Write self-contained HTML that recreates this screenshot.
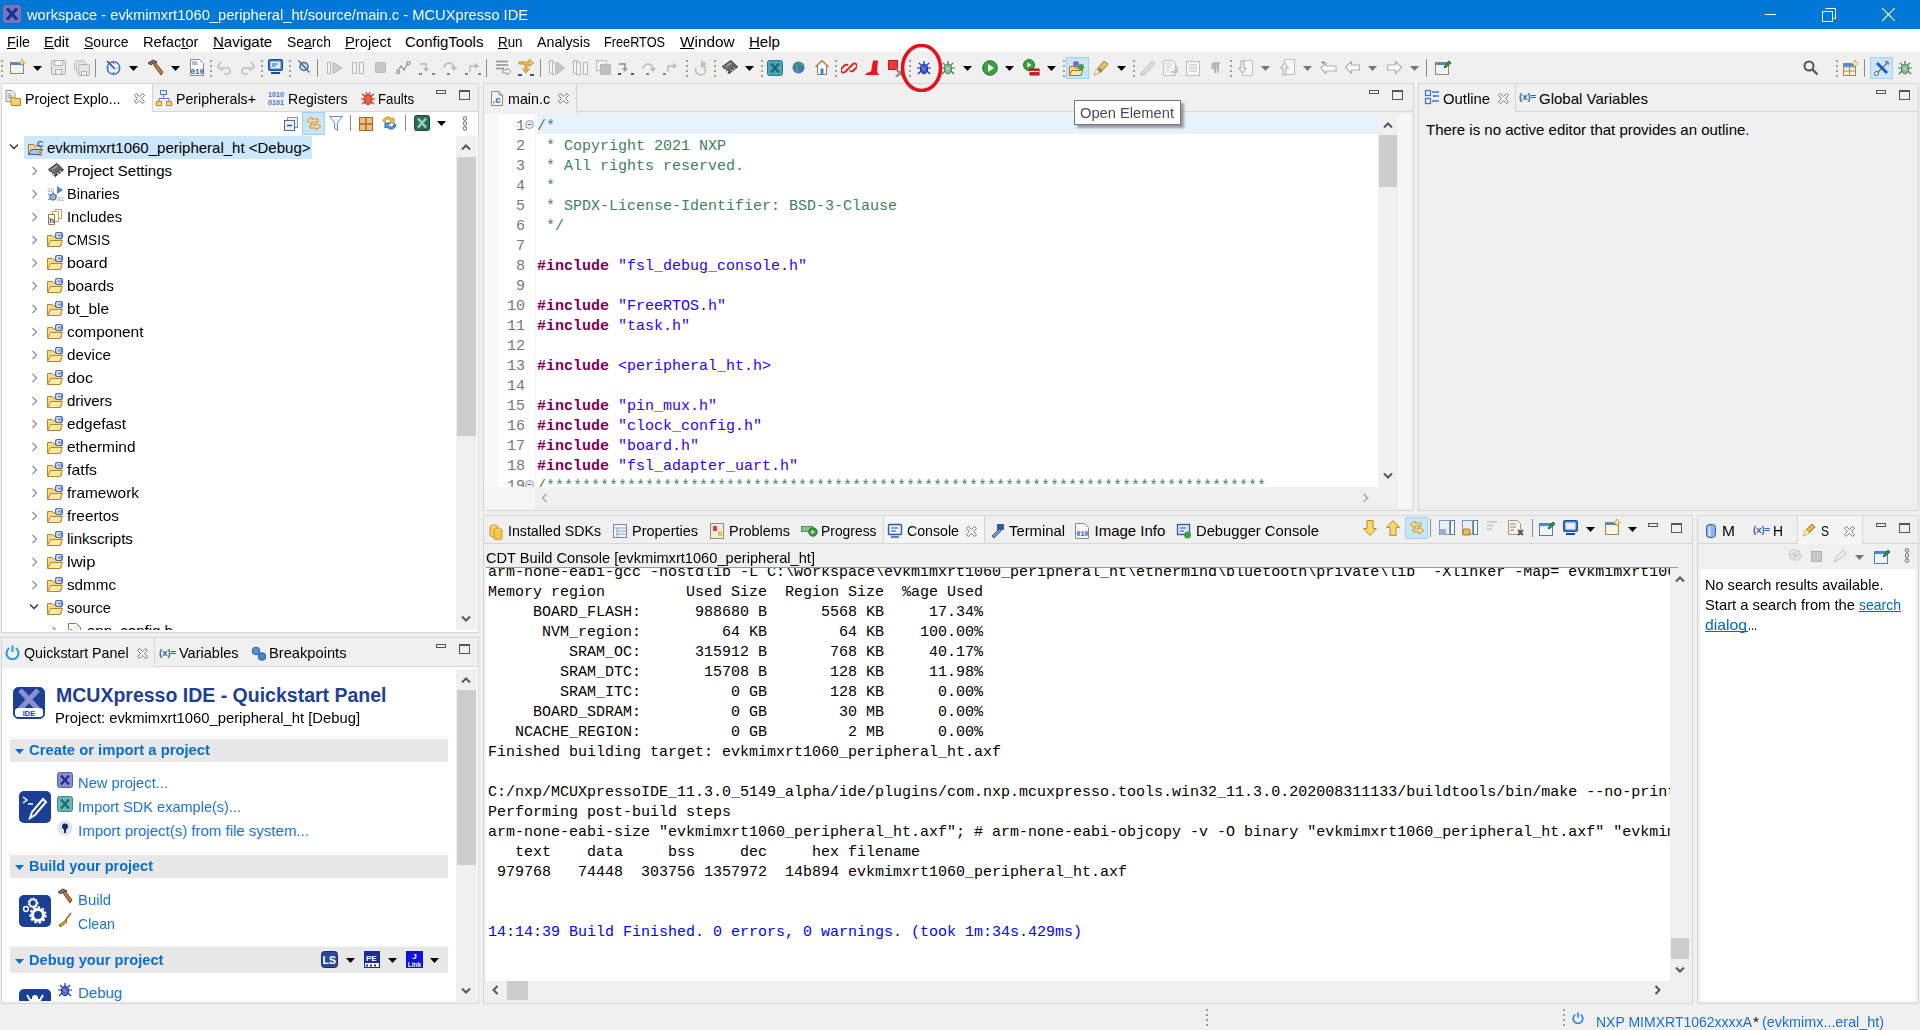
<!DOCTYPE html><html><head><meta charset="utf-8"><title>MCUXpresso IDE</title><style>
*{margin:0;padding:0;box-sizing:border-box}
html,body{width:1920px;height:1030px;overflow:hidden;background:#f0f0f0;font-family:"Liberation Sans",sans-serif;font-size:15px;color:#000}
div,span,svg{position:absolute}
.t{white-space:pre;line-height:20px}
.m{font-family:"Liberation Mono",monospace;font-size:15px;white-space:pre;line-height:20px}
</style></head><body>
<div style="left:0px;top:0px;width:1920px;height:29px;background:#0078d7"></div>
<svg style="left:2px;top:4px;" width="20" height="20" viewBox="0 0 20 20"><rect x="0.5" y="0.5" width="19" height="19" rx="3" fill="#7078c4" stroke="#4a55a8"/><path d="M5 4.5 L15 15.5 M15 4.5 L5 15.5" stroke="#1d2f8c" stroke-width="3.2"/></svg>
<span class="t" style="left:27px;top:5px;font-size:15px;transform:scaleX(0.979);transform-origin:0 0;color:#fff">workspace - evkmimxrt1060_peripheral_ht/source/main.c - MCUXpresso IDE</span>
<div style="left:1765px;top:14px;width:11px;height:1px;background:#fff"></div>
<svg style="left:1822px;top:8px;" width="14" height="14" viewBox="0 0 14 14"><path d="M3.5 0.5h10v10h-2 M0.5 3.5h10v10h-10z" fill="none" stroke="#fff"/></svg>
<svg style="left:1882px;top:8px;" width="13" height="13" viewBox="0 0 13 13"><path d="M0 0L13 13M13 0L0 13" stroke="#fff" stroke-width="1.2"/></svg>
<div style="left:0px;top:29px;width:1920px;height:23px;background:#fff"></div>
<span class="t" style="left:7px;top:32px;font-size:15px;transform:scaleX(0.952);transform-origin:0 0;color:#000">File</span>
<div style="left:7px;top:48px;width:9px;height:1px;background:#000"></div>
<span class="t" style="left:44px;top:32px;font-size:15px;transform:scaleX(0.967);transform-origin:0 0;color:#000">Edit</span>
<div style="left:44px;top:48px;width:10px;height:1px;background:#000"></div>
<span class="t" style="left:84px;top:32px;font-size:15px;transform:scaleX(0.936);transform-origin:0 0;color:#000">Source</span>
<div style="left:84px;top:48px;width:9px;height:1px;background:#000"></div>
<span class="t" style="left:143px;top:32px;font-size:15px;transform:scaleX(0.979);transform-origin:0 0;color:#000">Refactor</span>
<div style="left:181px;top:48px;width:7px;height:1px;background:#000"></div>
<span class="t" style="left:213px;top:32px;font-size:15px;color:#000">Navigate</span>
<div style="left:213px;top:48px;width:11px;height:1px;background:#000"></div>
<span class="t" style="left:287px;top:32px;font-size:15px;transform:scaleX(0.926);transform-origin:0 0;color:#000">Search</span>
<div style="left:304px;top:48px;width:8px;height:1px;background:#000"></div>
<span class="t" style="left:345px;top:32px;font-size:15px;transform:scaleX(0.985);transform-origin:0 0;color:#000">Project</span>
<div style="left:345px;top:48px;width:10px;height:1px;background:#000"></div>
<span class="t" style="left:405px;top:32px;font-size:15px;color:#000">ConfigTools</span>
<span class="t" style="left:498px;top:32px;font-size:15px;transform:scaleX(0.890);transform-origin:0 0;color:#000">Run</span>
<div style="left:498px;top:48px;width:10px;height:1px;background:#000"></div>
<span class="t" style="left:537px;top:32px;font-size:15px;transform:scaleX(0.949);transform-origin:0 0;color:#000">Analysis</span>
<span class="t" style="left:604px;top:32px;font-size:15px;transform:scaleX(0.848);transform-origin:0 0;color:#000">FreeRTOS</span>
<span class="t" style="left:680px;top:32px;font-size:15px;transform:scaleX(1.022);transform-origin:0 0;color:#000">Window</span>
<div style="left:680px;top:48px;width:14px;height:1px;background:#000"></div>
<span class="t" style="left:749px;top:32px;font-size:15px;color:#000">Help</span>
<div style="left:749px;top:48px;width:11px;height:1px;background:#000"></div>
<div style="left:0px;top:52px;width:1920px;height:30px;background:#f0f0f0"></div>
<div style="left:1px;top:60px;width:2px;height:2px;background:#a89f86"></div>
<div style="left:1px;top:65px;width:2px;height:2px;background:#a89f86"></div>
<div style="left:1px;top:70px;width:2px;height:2px;background:#a89f86"></div>
<div style="left:1px;top:75px;width:2px;height:2px;background:#a89f86"></div>
<svg style="left:10px;top:59px;" width="16" height="16" viewBox="0 0 16 16"><rect x="0.5" y="3.5" width="13" height="11" fill="#eef5fc" stroke="#a08850"/><rect x="0.5" y="3.5" width="13" height="2.5" fill="#4a8ad0"/><path d="M12 0l1 2.5 2.5 1-2.5 1-1 2.5-1-2.5-2.5-1 2.5-1z" fill="#f8e8a0" stroke="#c8962a" stroke-width="0.7"/></svg>
<svg style="left:33px;top:66px;" width="9" height="5" viewBox="0 0 9 5"><path d="M0 0H9L4.5 5z" fill="#000"/></svg>
<svg style="left:51px;top:60px;" width="16" height="16" viewBox="0 0 16 16"><rect x="0.5" y="0.5" width="14" height="14" rx="1.5" fill="#e6e6e6" stroke="#b0b0b0"/><rect x="3.5" y="0.5" width="8" height="5" fill="#f4f4f4" stroke="#b0b0b0"/><rect x="4.5" y="9.5" width="6" height="5" fill="#f0f0f0" stroke="#b0b0b0"/></svg>
<svg style="left:74px;top:60px;" width="16" height="16" viewBox="0 0 16 16"><rect x="0.5" y="0.5" width="10" height="10" rx="1" fill="#eee" stroke="#c0c0c0"/><rect x="2.5" y="2.5" width="10" height="10" rx="1" fill="#eee" stroke="#c0c0c0"/><rect x="4.5" y="4.5" width="11" height="11" rx="1.5" fill="#e6e6e6" stroke="#b0b0b0"/><rect x="7.5" y="11.5" width="5" height="4" fill="#f0f0f0" stroke="#b0b0b0"/></svg>
<div style="left:95px;top:59px;width:1px;height:18px;background:#8c8c8c"></div>
<svg style="left:106px;top:60px;" width="15" height="15" viewBox="0 0 15 15"><circle cx="7.5" cy="8" r="6.3" fill="#e8f0fa" stroke="#3a7ac0" stroke-width="1.4"/><path d="M1 1l8 8" stroke="#3a4a8a" stroke-width="1.6"/><path d="M7.5 2v2M13.5 8h-2M7.5 14v-2M1.5 8h2" stroke="#3a7ac0"/></svg>
<svg style="left:129px;top:66px;" width="9" height="5" viewBox="0 0 9 5"><path d="M0 0H9L4.5 5z" fill="#000"/></svg>
<svg style="left:147px;top:59px;" width="17" height="17" viewBox="0 0 17 17"><path d="M1 4l5-3 4 2-2 2-2-1-2 2z" fill="#777" stroke="#444"/><path d="M6 5l2-2 8 10-2 3z" fill="#b87a40" stroke="#7a4a1a"/></svg>
<svg style="left:171px;top:66px;" width="9" height="5" viewBox="0 0 9 5"><path d="M0 0H9L4.5 5z" fill="#000"/></svg>
<svg style="left:190px;top:59px;" width="14" height="17" viewBox="0 0 14 17"><path d="M0.5 0.5h9l4 4v12h-13z" fill="#fff" stroke="#8a8a8a"/><path d="M2 3h5M2 5h6" stroke="#4a7ad0"/><text x="0.5" y="14.5" font-size="7.5" font-family="Liberation Mono" font-weight="bold" fill="#2a5aa8">010</text></svg>
<div style="left:210px;top:60px;width:2px;height:2px;background:#a89f86"></div>
<div style="left:210px;top:65px;width:2px;height:2px;background:#a89f86"></div>
<div style="left:210px;top:70px;width:2px;height:2px;background:#a89f86"></div>
<div style="left:210px;top:75px;width:2px;height:2px;background:#a89f86"></div>
<svg style="left:217px;top:60px;" width="15" height="15" viewBox="0 0 15 15"><path d="M4 2L0.5 7 5 10V8h5a3 3 0 0 1 0 6H7" fill="none" stroke="#c0c0c0" stroke-width="1.6"/></svg>
<svg style="left:240px;top:60px;" width="15" height="15" viewBox="0 0 15 15"><path d="M11 2l3.5 5L10 10V8H5a3 3 0 0 0 0 6h3" fill="none" stroke="#c0c0c0" stroke-width="1.6"/></svg>
<div style="left:261px;top:60px;width:2px;height:2px;background:#a89f86"></div>
<div style="left:261px;top:65px;width:2px;height:2px;background:#a89f86"></div>
<div style="left:261px;top:70px;width:2px;height:2px;background:#a89f86"></div>
<div style="left:261px;top:75px;width:2px;height:2px;background:#a89f86"></div>
<svg style="left:268px;top:59px;" width="15" height="16" viewBox="0 0 15 16"><rect x="0.5" y="0.5" width="14" height="11" rx="1.5" fill="#3a78c8" stroke="#1a4a98"/><rect x="2.5" y="2.5" width="10" height="7" fill="#e8f0fa"/><path d="M4 5h6M4 7h4" stroke="#2a5aa8"/><path d="M3 14h9" stroke="#1a4a98" stroke-width="2"/></svg>
<div style="left:289px;top:60px;width:2px;height:2px;background:#a89f86"></div>
<div style="left:289px;top:65px;width:2px;height:2px;background:#a89f86"></div>
<div style="left:289px;top:70px;width:2px;height:2px;background:#a89f86"></div>
<div style="left:289px;top:75px;width:2px;height:2px;background:#a89f86"></div>
<svg style="left:298px;top:60px;" width="12" height="13" viewBox="0 0 12 13"><circle cx="6" cy="6.5" r="4" fill="#cde" stroke="#3a6aa8" stroke-width="1.5"/><path d="M0.5 0.5l11 12" stroke="#4a6a9a" stroke-width="1.3"/></svg>
<div style="left:317px;top:59px;width:1px;height:18px;background:#8c8c8c"></div>
<svg style="left:327px;top:62px;" width="16" height="12" viewBox="0 0 16 12"><rect x="0.5" y="0.5" width="3" height="11" fill="#f4f4f4" stroke="#b8b8b8"/><path d="M6 0.5l9 5.5-9 5.5z" fill="#d0d0d0" stroke="#b8b8b8"/></svg>
<svg style="left:352px;top:62px;" width="12" height="12" viewBox="0 0 12 12"><rect x="0.5" y="0.5" width="4" height="11" fill="#f4f4f4" stroke="#b8b8b8"/><rect x="7.5" y="0.5" width="4" height="11" fill="#f4f4f4" stroke="#b8b8b8"/></svg>
<svg style="left:375px;top:62px;" width="11" height="11" viewBox="0 0 11 11"><rect x="0.5" y="0.5" width="10" height="10" rx="1" fill="#c8c8c8" stroke="#b8b8b8"/></svg>
<svg style="left:396px;top:61px;" width="15" height="13" viewBox="0 0 15 13"><path d="M1 11l4-6 3 4 4-7" fill="none" stroke="#999" stroke-width="1.3"/><circle cx="2" cy="11" r="1.8" fill="#ddd" stroke="#888"/><circle cx="12.5" cy="2" r="1.8" fill="#ddd" stroke="#888"/></svg>
<svg style="left:419px;top:61px;" width="16" height="14" viewBox="0 0 16 14"><path d="M1 3h6v6" fill="none" stroke="#b8b8b8" stroke-width="1.4"/><path d="M4 7l3 4 3-4z" fill="#b8b8b8"/><rect x="0" y="12" width="3" height="2" fill="#888"/><rect x="13" y="12" width="3" height="2" fill="#888"/></svg>
<svg style="left:442px;top:60px;" width="16" height="15" viewBox="0 0 16 15"><path d="M2 8a5 5 0 0 1 10 0" fill="none" stroke="#b8b8b8" stroke-width="1.4"/><path d="M9 7l3 4 3-4z" fill="#b8b8b8"/><rect x="5" y="13" width="3" height="2" fill="#888"/></svg>
<svg style="left:465px;top:60px;" width="16" height="15" viewBox="0 0 16 15"><path d="M5 12V6h6" fill="none" stroke="#b8b8b8" stroke-width="1.4"/><path d="M10 3l4 3-4 3z" fill="#b8b8b8"/><rect x="0" y="13" width="3" height="2" fill="#888"/><rect x="13" y="13" width="3" height="2" fill="#888"/></svg>
<div style="left:486px;top:59px;width:1px;height:18px;background:#8c8c8c"></div>
<svg style="left:495px;top:60px;" width="16" height="16" viewBox="0 0 16 16"><path d="M1 1.5h12M1 5h12M1 8.5h8" stroke="#909090" stroke-width="1.6"/><path d="M8 10h4V8l4 3.5-4 3.5v-2H8z" fill="#fff" stroke="#909090"/></svg>
<svg style="left:518px;top:59px;" width="17" height="17" viewBox="0 0 17 17"><path d="M1 3h10V0.5l4.5 3.5L11 7.5V5H9v7l2.5-2.5L8 14 4.5 9.5 7 12V5H1z" fill="#f8d060" stroke="#c08820"/><rect x="0" y="15" width="4" height="2" fill="#2a5aa8"/><rect x="12" y="15" width="4" height="2" fill="#2a5aa8"/></svg>
<div style="left:540px;top:59px;width:1px;height:18px;background:#8c8c8c"></div>
<svg style="left:549px;top:60px;" width="16" height="15" viewBox="0 0 16 15"><rect x="0.5" y="0.5" width="3" height="13" fill="#f4f4f4" stroke="#b8b8b8"/><rect x="3.5" y="2.5" width="3" height="12" fill="#f4f4f4" stroke="#b8b8b8"/><path d="M8 2l7.5 6L8 14z" fill="#c8c8c8" stroke="#b8b8b8"/></svg>
<svg style="left:573px;top:60px;" width="15" height="15" viewBox="0 0 15 15"><rect x="0.5" y="0.5" width="4" height="13" fill="#f4f4f4" stroke="#b8b8b8"/><rect x="3.5" y="2.5" width="4" height="12" fill="#f4f4f4" stroke="#b8b8b8"/><rect x="10.5" y="2.5" width="4" height="12" fill="#f4f4f4" stroke="#b8b8b8"/></svg>
<svg style="left:596px;top:60px;" width="15" height="15" viewBox="0 0 15 15"><rect x="0.5" y="0.5" width="10" height="10" fill="#f0f0f0" stroke="#b8b8b8"/><rect x="4.5" y="4.5" width="10" height="10" fill="#c0c0c0" stroke="#b8b8b8"/></svg>
<svg style="left:618px;top:61px;" width="16" height="14" viewBox="0 0 16 14"><path d="M1 3h6v6" fill="none" stroke="#888" stroke-width="1.4"/><path d="M4 7l3 4 3-4z" fill="#999"/><rect x="0" y="12" width="3" height="2" fill="#555"/><rect x="13" y="12" width="3" height="2" fill="#555"/></svg>
<svg style="left:641px;top:61px;" width="16" height="14" viewBox="0 0 16 14"><path d="M2 8a5 5 0 0 1 10 0" fill="none" stroke="#b8b8b8" stroke-width="1.4"/><path d="M9 7l3 4 3-4z" fill="#b8b8b8"/><rect x="5" y="12" width="3" height="2" fill="#888"/></svg>
<svg style="left:663px;top:60px;" width="16" height="15" viewBox="0 0 16 15"><path d="M5 12V6h6" fill="none" stroke="#b8b8b8" stroke-width="1.4"/><path d="M10 3l4 3-4 3z" fill="#b8b8b8"/><rect x="0" y="13" width="3" height="2" fill="#888"/></svg>
<div style="left:686px;top:60px;width:2px;height:2px;background:#a89f86"></div>
<div style="left:686px;top:65px;width:2px;height:2px;background:#a89f86"></div>
<div style="left:686px;top:70px;width:2px;height:2px;background:#a89f86"></div>
<div style="left:686px;top:75px;width:2px;height:2px;background:#a89f86"></div>
<svg style="left:693px;top:59px;" width="16" height="17" viewBox="0 0 16 17"><path d="M8 1l6 4-6 4z" fill="#c0c0c0"/><path d="M3 9a5 5 0 1 0 5-3" fill="none" stroke="#b8b8b8" stroke-width="1.4"/></svg>
<div style="left:714px;top:60px;width:2px;height:2px;background:#a89f86"></div>
<div style="left:714px;top:65px;width:2px;height:2px;background:#a89f86"></div>
<div style="left:714px;top:70px;width:2px;height:2px;background:#a89f86"></div>
<div style="left:714px;top:75px;width:2px;height:2px;background:#a89f86"></div>
<svg style="left:722px;top:60px;" width="16" height="15" viewBox="0 0 16 15"><defs><linearGradient id="cg" x1="0" y1="0" x2="1" y2="1"><stop offset="0" stop-color="#9a9a9a"/><stop offset="1" stop-color="#3a3a3a"/></linearGradient></defs><path d="M0.5 6.5L9 0.5 15.5 7 7 13.5z" fill="url(#cg)" stroke="#222"/><path d="M3 9.5l1 1M5 11l1 1M9.5 11l1-1M12 9l1-1" stroke="#fff" stroke-width="1.3"/><path d="M5 6l4-3" stroke="#bbb"/></svg>
<svg style="left:745px;top:66px;" width="9" height="5" viewBox="0 0 9 5"><path d="M0 0H9L4.5 5z" fill="#000"/></svg>
<div style="left:761px;top:60px;width:2px;height:2px;background:#a89f86"></div>
<div style="left:761px;top:65px;width:2px;height:2px;background:#a89f86"></div>
<div style="left:761px;top:70px;width:2px;height:2px;background:#a89f86"></div>
<div style="left:761px;top:75px;width:2px;height:2px;background:#a89f86"></div>
<svg style="left:767px;top:60px;" width="16" height="16" viewBox="0 0 16 16"><rect x="0.5" y="0.5" width="15" height="15" rx="2" fill="#4aa8b8" stroke="#2a7888"/><path d="M4 3.5L12 12.5M12 3.5L4 12.5" stroke="#1a6a78" stroke-width="2.6"/></svg>
<svg style="left:792px;top:61px;" width="13" height="13" viewBox="0 0 13 13"><circle cx="6.5" cy="6.5" r="6" fill="#3a7ac8"/><path d="M3 3c2 0 3 2 2 4s1 3 2 4M8 1c0 2 2 3 4 3" stroke="#4aa850" stroke-width="2" fill="none"/></svg>
<svg style="left:815px;top:59px;" width="14" height="16" viewBox="0 0 14 16"><path d="M7 1L0.5 7.5h2v8h9v-8h2z" fill="#fff" stroke="#8a7a5a"/><rect x="5.5" y="9.5" width="3" height="6" fill="#3a8ad0"/><path d="M2 7L7 2l5 5" fill="none" stroke="#c8a040" stroke-width="1.4"/></svg>
<div style="left:835px;top:60px;width:2px;height:2px;background:#a89f86"></div>
<div style="left:835px;top:65px;width:2px;height:2px;background:#a89f86"></div>
<div style="left:835px;top:70px;width:2px;height:2px;background:#a89f86"></div>
<div style="left:835px;top:75px;width:2px;height:2px;background:#a89f86"></div>
<svg style="left:841px;top:60px;" width="16" height="16" viewBox="0 0 16 16"><path d="M6 10L4 12a2.5 2.5 0 0 1-3.5-3.5l3-3a2.5 2.5 0 0 1 3.5 0M10 6l2-2a2.5 2.5 0 0 1 3.5 3.5l-3 3a2.5 2.5 0 0 1-3.5 0M5.5 10.5l5-5" fill="none" stroke="#e02020" stroke-width="1.8"/></svg>
<svg style="left:864px;top:60px;" width="16" height="16" viewBox="0 0 16 16"><path d="M9 0.5h5l-1 11 2 3.5H1l1-1.5 5-2z" fill="#e81818"/></svg>
<svg style="left:888px;top:60px;" width="18" height="17" viewBox="0 0 18 17"><rect x="0.5" y="0.5" width="9" height="9" fill="#e83a3a" stroke="#b82020"/><path d="M8 9l8 8M16 9l-8 8" stroke="#8a8a8a" stroke-width="2.4"/></svg>
<div style="left:909px;top:60px;width:2px;height:2px;background:#a89f86"></div>
<div style="left:909px;top:65px;width:2px;height:2px;background:#a89f86"></div>
<div style="left:909px;top:70px;width:2px;height:2px;background:#a89f86"></div>
<div style="left:909px;top:75px;width:2px;height:2px;background:#a89f86"></div>
<svg style="left:916px;top:60px;" width="16" height="16" viewBox="0 0 16 16"><path d="M3 3l3 3M13 3l-3 3M1 8h4M15 8h-4M2 14l3-3M14 14l-3-3M8 1v3" stroke="#1a2a9a" stroke-width="1.2"/><ellipse cx="8" cy="9" rx="3.6" ry="4.8" fill="#3a5ad8" stroke="#1a2a9a"/><path d="M6.5 7.5l2 2" stroke="#fff" stroke-width="0.8"/></svg>
<svg style="left:940px;top:60px;" width="16" height="16" viewBox="0 0 16 16"><path d="M3 3l3 3M13 3l-3 3M1 8h4M15 8h-4M2 14l3-3M14 14l-3-3M8 1v3" stroke="#3a7a5a" stroke-width="1.2"/><ellipse cx="8" cy="9" rx="3.6" ry="4.8" fill="#8ac08a" stroke="#3a7a5a"/><path d="M6.5 7.5l2 2" stroke="#fff" stroke-width="0.8"/></svg>
<svg style="left:963px;top:66px;" width="9" height="5" viewBox="0 0 9 5"><path d="M0 0H9L4.5 5z" fill="#000"/></svg>
<svg style="left:982px;top:60px;" width="16" height="16" viewBox="0 0 16 16"><circle cx="8" cy="8" r="7.3" fill="#3aa040" stroke="#1a7a28"/><path d="M6 4l6 4-6 4z" fill="#fff"/></svg>
<svg style="left:1005px;top:66px;" width="9" height="5" viewBox="0 0 9 5"><path d="M0 0H9L4.5 5z" fill="#000"/></svg>
<svg style="left:1023px;top:59px;" width="17" height="17" viewBox="0 0 17 17"><circle cx="6" cy="6" r="5.5" fill="#3aa040" stroke="#1a7a28"/><path d="M4.5 3.5l4 2.5-4 2.5z" fill="#fff"/><rect x="7" y="10" width="9" height="6" fill="#e02020" stroke="#a01010"/><path d="M7 12.5h9" stroke="#fff"/></svg>
<svg style="left:1047px;top:66px;" width="9" height="5" viewBox="0 0 9 5"><path d="M0 0H9L4.5 5z" fill="#000"/></svg>
<div style="left:1063px;top:60px;width:2px;height:2px;background:#a89f86"></div>
<div style="left:1063px;top:65px;width:2px;height:2px;background:#a89f86"></div>
<div style="left:1063px;top:70px;width:2px;height:2px;background:#a89f86"></div>
<div style="left:1063px;top:75px;width:2px;height:2px;background:#a89f86"></div>
<div style="left:1066px;top:57px;width:23px;height:22px;background:#cce4f7;border:1px solid #99d1ff"></div>
<svg style="left:1069px;top:60px;" width="17" height="16" viewBox="0 0 17 16"><path d="M0.5 6.5h5l1 1.5h6v7h-12z" fill="#f5d98a" stroke="#a8782a"/><path d="M0.5 15.5l2.5-5h11l-2.5 5z" fill="#fbe7a8" stroke="#a8782a"/><circle cx="7" cy="4" r="3" fill="#7a6ad0"/><circle cx="12" cy="7" r="3" fill="#3aa040"/></svg>
<svg style="left:1093px;top:59px;" width="17" height="17" viewBox="0 0 17 17"><path d="M1 16l3-6 7-8 4 3-7 8z" fill="#e8c060" stroke="#a8782a"/><path d="M1 16l3-6 3 3z" fill="#fff3c0"/><circle cx="7" cy="11" r="2" fill="#888"/></svg>
<svg style="left:1117px;top:66px;" width="9" height="5" viewBox="0 0 9 5"><path d="M0 0H9L4.5 5z" fill="#000"/></svg>
<div style="left:1133px;top:60px;width:2px;height:2px;background:#a89f86"></div>
<div style="left:1133px;top:65px;width:2px;height:2px;background:#a89f86"></div>
<div style="left:1133px;top:70px;width:2px;height:2px;background:#a89f86"></div>
<div style="left:1133px;top:75px;width:2px;height:2px;background:#a89f86"></div>
<svg style="left:1139px;top:60px;" width="17" height="16" viewBox="0 0 17 16"><path d="M1 15h5l10-12-3-2-9 10z" fill="#e0e0d8" stroke="#c0c0b8"/></svg>
<svg style="left:1163px;top:60px;" width="15" height="16" viewBox="0 0 15 16"><path d="M0.5 0.5h9l3 3v12h-12z" fill="#f4f4f4" stroke="#c0c0c0"/><path d="M3 4h5M3 7h5M3 10h3" stroke="#c8c8c8"/><path d="M14 6v6H8" fill="none" stroke="#b8b8b8" stroke-width="1.4"/></svg>
<svg style="left:1186px;top:61px;" width="14" height="15" viewBox="0 0 14 15"><rect x="0.5" y="0.5" width="13" height="14" fill="#f8f8f8" stroke="#c0c0c0"/><path d="M3 4h8M3 7h8M3 10h8" stroke="#b8b8b8"/></svg>
<svg style="left:1211px;top:62px;" width="9" height="12" viewBox="0 0 9 12"><path d="M4 11V1h5M7 1v10M4 1a3 3 0 0 0 0 6" fill="#c8c8c8" stroke="#b0b0b0" stroke-width="1.6"/></svg>
<div style="left:1230px;top:60px;width:2px;height:2px;background:#a89f86"></div>
<div style="left:1230px;top:65px;width:2px;height:2px;background:#a89f86"></div>
<div style="left:1230px;top:70px;width:2px;height:2px;background:#a89f86"></div>
<div style="left:1230px;top:75px;width:2px;height:2px;background:#a89f86"></div>
<svg style="left:1238px;top:60px;" width="15" height="16" viewBox="0 0 15 16"><path d="M4.5 0.5h10v15h-10z" fill="#f8f8f8" stroke="#c0c0c0"/><path d="M3 1v7H0.5L4.5 13 8.5 8H6V1z" fill="#f0f0f0" stroke="#a8a8a8"/></svg>
<svg style="left:1261px;top:66px;" width="9" height="5" viewBox="0 0 9 5"><path d="M0 0H9L4.5 5z" fill="#777"/></svg>
<svg style="left:1280px;top:59px;" width="15" height="17" viewBox="0 0 15 17"><path d="M4.5 0.5h10v15h-10z" fill="#f8f8f8" stroke="#c0c0c0"/><path d="M3 16V9H0.5L4.5 4 8.5 9H6v7z" fill="#f0f0f0" stroke="#a8a8a8"/></svg>
<svg style="left:1303px;top:66px;" width="9" height="5" viewBox="0 0 9 5"><path d="M0 0H9L4.5 5z" fill="#777"/></svg>
<svg style="left:1320px;top:61px;" width="17" height="13" viewBox="0 0 17 13"><path d="M1 7l5-5v3h10v5H6v3z" fill="#fff" stroke="#b0b0b0" stroke-width="1.2"/><path d="M3 0v3M1.5 1.5h3" stroke="#777"/></svg>
<svg style="left:1345px;top:61px;" width="15" height="13" viewBox="0 0 15 13"><path d="M0.5 6.5l6-6v3.5h8v5h-8v3.5z" fill="#fff" stroke="#b0b0b0" stroke-width="1.2"/></svg>
<svg style="left:1368px;top:66px;" width="9" height="5" viewBox="0 0 9 5"><path d="M0 0H9L4.5 5z" fill="#777"/></svg>
<svg style="left:1387px;top:61px;" width="15" height="13" viewBox="0 0 15 13"><path d="M14.5 6.5l-6-6v3.5h-8v5h8v3.5z" fill="#fff" stroke="#b0b0b0" stroke-width="1.2"/></svg>
<svg style="left:1410px;top:66px;" width="9" height="5" viewBox="0 0 9 5"><path d="M0 0H9L4.5 5z" fill="#777"/></svg>
<div style="left:1426px;top:59px;width:1px;height:18px;background:#8c8c8c"></div>
<svg style="left:1435px;top:59px;" width="17" height="17" viewBox="0 0 17 17"><rect x="0.5" y="3.5" width="13" height="12" fill="#eef5fc" stroke="#a08850"/><rect x="0.5" y="3.5" width="13" height="2.5" fill="#4a8ad0"/><path d="M9 8l5-6 2 2-6 5z" fill="#3a9a40" stroke="#1a6a28"/></svg>
<svg style="left:1803px;top:60px;" width="16" height="16" viewBox="0 0 16 16"><circle cx="6" cy="6" r="4.5" fill="none" stroke="#555" stroke-width="2"/><path d="M9.5 9.5l5 5" stroke="#555" stroke-width="2.4"/></svg>
<div style="left:1836px;top:60px;width:2px;height:2px;background:#a89f86"></div>
<div style="left:1836px;top:65px;width:2px;height:2px;background:#a89f86"></div>
<div style="left:1836px;top:70px;width:2px;height:2px;background:#a89f86"></div>
<div style="left:1836px;top:75px;width:2px;height:2px;background:#a89f86"></div>
<svg style="left:1843px;top:60px;" width="15" height="16" viewBox="0 0 15 16"><rect x="0.5" y="3.5" width="12" height="12" fill="#fdf6e3" stroke="#a08850"/><path d="M0.5 7h12M6.5 7v8.5M0.5 11h12" stroke="#a08850"/><rect x="0.5" y="3.5" width="12" height="3" fill="#4a8ad0"/><path d="M12 0l1.2 2.3 2.3 1.2-2.3 1.2-1.2 2.3-1.2-2.3-2.3-1.2 2.3-1.2z" fill="#f8e8a0" stroke="#c8962a" stroke-width="0.7"/></svg>
<div style="left:1864px;top:59px;width:1px;height:18px;background:#8c8c8c"></div>
<div style="left:1870px;top:57px;width:23px;height:22px;background:#cce4f7;border:1px solid #99d1ff"></div>
<svg style="left:1874px;top:60px;" width="16" height="16" viewBox="0 0 16 16"><path d="M2 14L13 3" stroke="#777" stroke-width="1.5"/><circle cx="2.5" cy="13.5" r="2" fill="#fff" stroke="#555"/><path d="M3 3l10 10" stroke="#1a5ac0" stroke-width="2.8"/><path d="M11 1a3 3 0 0 1 4 4l-2-1-1 1z" fill="#888"/></svg>
<svg style="left:1897px;top:60px;" width="16" height="16" viewBox="0 0 16 16"><path d="M3 3l3 3M13 3l-3 3M1 8h4M15 8h-4M2 14l3-3M14 14l-3-3M8 1v3" stroke="#3a7a5a" stroke-width="1.2"/><ellipse cx="8" cy="9" rx="3.6" ry="4.8" fill="#8ac08a" stroke="#3a7a5a"/><path d="M6.5 7.5l2 2" stroke="#fff" stroke-width="0.8"/></svg>
<div style="left:1px;top:83px;width:478px;height:550px;background:#fff;border:1px solid #d6d6d6"></div>
<div style="left:152px;top:84px;width:326px;height:28px;background:#f0f0f0;border-left:1px solid #d6d6d6;border-bottom:1px solid #d6d6d6"></div>
<svg style="left:5px;top:90px;" width="16" height="16" viewBox="0 0 16 16"><path d="M1 0.5h6l3 3v8h-9z" fill="#f4f4f4" stroke="#9a8f6a"/><path d="M2.5 4h4M2.5 6h5M2.5 8h5" stroke="#6f8fd0"/><path d="M6 7.5h3l1 1h5.5v7h-9.5z" fill="#f8d36a" stroke="#b8862a"/></svg>
<span class="t" style="left:25px;top:89px;font-size:15px;transform:scaleX(0.947);transform-origin:0 0;">Project Explo...</span>
<svg style="left:134px;top:93px;" width="11" height="11" viewBox="0 0 11 11"><path d="M0.5 2.3L2.3 0.5 5.5 3.7 8.7 0.5 10.5 2.3 7.3 5.5 10.5 8.7 8.7 10.5 5.5 7.3 2.3 10.5 0.5 8.7 3.7 5.5z" fill="#fff" stroke="#6e6e6e" stroke-width="1" stroke-linejoin="round"/></svg>
<svg style="left:156px;top:90px;" width="16" height="16" viewBox="0 0 16 16"><rect x="4.5" y="0.5" width="6" height="4" fill="#dfe8f5" stroke="#5a7bb5"/><path d="M7.5 4.5v4M3 8.5h10M3 8.5v3M13 8.5v3" stroke="#5a7bb5"/><rect x="0.5" y="11.5" width="5" height="4" fill="#f5d67a" stroke="#b88a2a"/><rect x="10.5" y="11.5" width="5" height="4" fill="#f5d67a" stroke="#b88a2a"/></svg>
<span class="t" style="left:176px;top:89px;font-size:15px;transform:scaleX(0.945);transform-origin:0 0;">Peripherals+</span>
<svg style="left:268px;top:90px;" width="17" height="16" viewBox="0 0 17 16"><g fill="#3d7bc8" font-family="Liberation Sans" font-weight="bold" font-size="7.2"><text x="0" y="7" textLength="16" lengthAdjust="spacingAndGlyphs">1010</text><text x="0" y="14.5" textLength="16" lengthAdjust="spacingAndGlyphs">0101</text></g></svg>
<span class="t" style="left:288px;top:89px;font-size:15px;transform:scaleX(0.939);transform-origin:0 0;">Registers</span>
<svg style="left:360px;top:90px;" width="16" height="16" viewBox="0 0 16 16"><path d="M2 4l3 2M14 4l-3 2M1 9h3M15 9h-3M2 14l3-2M14 14l-3-2M6 2l1 2M10 2l-1 2" stroke="#c03020" stroke-width="1.2"/><ellipse cx="8" cy="9.5" rx="4" ry="5" fill="#e8603a" stroke="#b02a10"/></svg>
<span class="t" style="left:378px;top:89px;font-size:15px;transform:scaleX(0.881);transform-origin:0 0;">Faults</span>
<div style="left:436px;top:90px;width:10px;height:4px;border:1px solid #555"></div>
<div style="left:459px;top:90px;width:11px;height:10px;border:1px solid #555;border-top-width:2px"></div>
<svg style="left:284px;top:117px;" width="14" height="14" viewBox="0 0 14 14"><rect x="3.5" y="0.5" width="10" height="10" fill="#eef3fa" stroke="#7a98c0"/><rect x="0.5" y="3.5" width="10" height="10" fill="#eef3fa" stroke="#4a6aa0"/><path d="M3 8.5h5" stroke="#2a4a8a" stroke-width="1.4"/></svg>
<div style="left:302px;top:112px;width:23px;height:23px;background:#cce4f7;border:1px solid #99d1ff"></div>
<svg style="left:306px;top:116px;" width="16" height="15" viewBox="0 0 16 15"><path d="M6 1L1 4.5 6 8V6h6V3H6z" fill="#f8e0a0" stroke="#c8962a"/><path d="M10 7l5 3.5-5 3.5v-2H4V9h6z" fill="#f8e0a0" stroke="#c8962a"/></svg>
<svg style="left:329px;top:116px;" width="14" height="15" viewBox="0 0 14 15"><path d="M0.5 0.5h13l-5 6v8l-3-2v-6z" fill="#f0f4fa" stroke="#6a8ab8"/></svg>
<div style="left:350px;top:115px;width:1px;height:16px;background:#8c8c8c"></div>
<svg style="left:359px;top:117px;" width="14" height="14" viewBox="0 0 14 14"><rect x="0.5" y="0.5" width="13" height="13" fill="#f0c080" stroke="#a86a2a"/><path d="M7 0.5v13M0.5 7h13" stroke="#a86a2a" stroke-width="1.4"/></svg>
<svg style="left:382px;top:115px;" width="15" height="17" viewBox="0 0 15 17"><path d="M1 6a5 5 0 0 1 9-2l2-1v5h-5l2-1.5a3 3 0 0 0-6 1z" fill="#f8c840" stroke="#c89020"/><path d="M14 10a5 5 0 0 1-9 2l-2 1v-5h5l-2 1.5a3 3 0 0 0 6-1z" fill="#5aa0e0" stroke="#2a6ab0"/></svg>
<div style="left:405px;top:115px;width:1px;height:16px;background:#8c8c8c"></div>
<svg style="left:414px;top:115px;" width="16" height="16" viewBox="0 0 16 16"><rect x="0.5" y="0.5" width="15" height="15" rx="2" fill="#2f6a58" stroke="#1f4a3a"/><path d="M4 3.5L12 12.5M12 3.5L4 12.5" stroke="#9ad0c0" stroke-width="2.6"/></svg>
<svg style="left:437px;top:121px;" width="9" height="5" viewBox="0 0 9 5"><path d="M0 0H9L4.5 5z" fill="#000"/></svg>
<svg style="left:462px;top:116px;" width="6" height="15" viewBox="0 0 6 15"><circle cx="3" cy="2.5" r="1.8" fill="none" stroke="#666"/><circle cx="3" cy="7.5" r="1.8" fill="none" stroke="#666"/><circle cx="3" cy="12.5" r="1.8" fill="none" stroke="#666"/></svg>
<div style="left:2px;top:136px;width:454px;height:494px;overflow:hidden">
<div style="left:22px;top:0px;width:288px;height:23px;background:#cce8ff"></div>
<svg style="left:7px;top:7px;" width="10" height="7" viewBox="0 0 10 7"><path d="M1 1.5L5 5.5 9 1.5" fill="none" stroke="#333" stroke-width="1.4"/></svg>
<svg style="left:26px;top:4px;" width="17" height="16" viewBox="0 0 17 16"><path d="M0.5 4.5h5l1.5 1.5h6v8h-12.5z" fill="#f5d98a" stroke="#8a7a5a"/><path d="M0.5 14.5l3-5h11l-2.5 5z" fill="#a8c8f0" stroke="#3a5aa8"/><text x="9" y="7" font-size="9" font-family="Liberation Sans" font-weight="bold" fill="#2a5aa8">C</text><text x="9.5" y="16" font-size="8" font-family="Liberation Sans" font-weight="bold" fill="#e8a020">S</text></svg>
<span class="t" style="left:45px;top:2px;font-size:15px;">evkmimxrt1060_peripheral_ht &lt;Debug&gt;</span>
<svg style="left:29px;top:30px;" width="7" height="10" viewBox="0 0 7 10"><path d="M1.5 1L5.5 5 1.5 9" fill="none" stroke="#8c8c8c" stroke-width="1.2"/></svg>
<svg style="left:46px;top:27px;" width="16" height="15" viewBox="0 0 16 15"><defs><linearGradient id="cg" x1="0" y1="0" x2="1" y2="1"><stop offset="0" stop-color="#9a9a9a"/><stop offset="1" stop-color="#3a3a3a"/></linearGradient></defs><path d="M0.5 6.5L9 0.5 15.5 7 7 13.5z" fill="url(#cg)" stroke="#222"/><path d="M3 9.5l1 1M5 11l1 1M9.5 11l1-1M12 9l1-1" stroke="#fff" stroke-width="1.3"/><path d="M5 6l4-3" stroke="#bbb"/></svg>
<span class="t" style="left:65px;top:25px;font-size:15px;">Project Settings</span>
<svg style="left:29px;top:53px;" width="7" height="10" viewBox="0 0 7 10"><path d="M1.5 1L5.5 5 1.5 9" fill="none" stroke="#8c8c8c" stroke-width="1.2"/></svg>
<svg style="left:45px;top:50px;" width="17" height="16" viewBox="0 0 17 16"><text x="0" y="6" font-size="6" font-family="Liberation Mono" fill="#999">10</text><path d="M10 0l6 4-6 4z" fill="#4a8ac8"/><circle cx="6" cy="11" r="3.2" fill="#9ab8d8" stroke="#3a6aa8"/><path d="M1 8l2 1.5M1 14l2-1.5M6 6v2M10 9l-1.5 1" stroke="#3a6aa8"/><text x="10" y="15" font-size="6" font-family="Liberation Mono" fill="#999">01</text></svg>
<span class="t" style="left:65px;top:48px;font-size:15px;transform:scaleX(0.969);transform-origin:0 0;">Binaries</span>
<svg style="left:29px;top:76px;" width="7" height="10" viewBox="0 0 7 10"><path d="M1.5 1L5.5 5 1.5 9" fill="none" stroke="#8c8c8c" stroke-width="1.2"/></svg>
<svg style="left:46px;top:73px;" width="16" height="16" viewBox="0 0 16 16"><path d="M7.5 0.5h6v9h-6z" fill="#fff" stroke="#c8a060"/><path d="M4.5 2.5h6v10h-6z" fill="#fff" stroke="#c8a060"/><path d="M0.5 5.5h6v10h-6z" fill="#fff" stroke="#a8782a"/><text x="1.3" y="14" font-size="8" font-family="Liberation Sans" font-weight="bold" fill="#2a4a8a">h</text></svg>
<span class="t" style="left:65px;top:71px;font-size:15px;transform:scaleX(0.985);transform-origin:0 0;">Includes</span>
<svg style="left:29px;top:99px;" width="7" height="10" viewBox="0 0 7 10"><path d="M1.5 1L5.5 5 1.5 9" fill="none" stroke="#8c8c8c" stroke-width="1.2"/></svg>
<svg style="left:45px;top:96px;" width="16" height="15" viewBox="0 0 16 15"><path d="M0.5 3.5h5l1.5 1.5h7v9h-13.5z" fill="#f5d98a" stroke="#b8862a"/><path d="M0.5 14.5l3-6h12l-2.5 6z" fill="#fbe7a8" stroke="#b8862a"/><rect x="8.5" y="0.5" width="7" height="6" rx="1" fill="#7a98d8" stroke="#4a68b0"/><path d="M13.5 2.3a2 2 0 1 0 0 2.4" fill="none" stroke="#fff" stroke-width="1.1"/></svg>
<span class="t" style="left:65px;top:94px;font-size:15px;transform:scaleX(0.905);transform-origin:0 0;">CMSIS</span>
<svg style="left:29px;top:122px;" width="7" height="10" viewBox="0 0 7 10"><path d="M1.5 1L5.5 5 1.5 9" fill="none" stroke="#8c8c8c" stroke-width="1.2"/></svg>
<svg style="left:45px;top:119px;" width="16" height="15" viewBox="0 0 16 15"><path d="M0.5 3.5h5l1.5 1.5h7v9h-13.5z" fill="#f5d98a" stroke="#b8862a"/><path d="M0.5 14.5l3-6h12l-2.5 6z" fill="#fbe7a8" stroke="#b8862a"/><rect x="8.5" y="0.5" width="7" height="6" rx="1" fill="#7a98d8" stroke="#4a68b0"/><path d="M13.5 2.3a2 2 0 1 0 0 2.4" fill="none" stroke="#fff" stroke-width="1.1"/></svg>
<span class="t" style="left:65px;top:117px;font-size:15px;transform:scaleX(1.056);transform-origin:0 0;">board</span>
<svg style="left:29px;top:145px;" width="7" height="10" viewBox="0 0 7 10"><path d="M1.5 1L5.5 5 1.5 9" fill="none" stroke="#8c8c8c" stroke-width="1.2"/></svg>
<svg style="left:45px;top:142px;" width="16" height="15" viewBox="0 0 16 15"><path d="M0.5 3.5h5l1.5 1.5h7v9h-13.5z" fill="#f5d98a" stroke="#b8862a"/><path d="M0.5 14.5l3-6h12l-2.5 6z" fill="#fbe7a8" stroke="#b8862a"/><rect x="8.5" y="0.5" width="7" height="6" rx="1" fill="#7a98d8" stroke="#4a68b0"/><path d="M13.5 2.3a2 2 0 1 0 0 2.4" fill="none" stroke="#fff" stroke-width="1.1"/></svg>
<span class="t" style="left:65px;top:140px;font-size:15px;transform:scaleX(1.025);transform-origin:0 0;">boards</span>
<svg style="left:29px;top:168px;" width="7" height="10" viewBox="0 0 7 10"><path d="M1.5 1L5.5 5 1.5 9" fill="none" stroke="#8c8c8c" stroke-width="1.2"/></svg>
<svg style="left:45px;top:165px;" width="16" height="15" viewBox="0 0 16 15"><path d="M0.5 3.5h5l1.5 1.5h7v9h-13.5z" fill="#f5d98a" stroke="#b8862a"/><path d="M0.5 14.5l3-6h12l-2.5 6z" fill="#fbe7a8" stroke="#b8862a"/><rect x="8.5" y="0.5" width="7" height="6" rx="1" fill="#7a98d8" stroke="#4a68b0"/><path d="M13.5 2.3a2 2 0 1 0 0 2.4" fill="none" stroke="#fff" stroke-width="1.1"/></svg>
<span class="t" style="left:65px;top:163px;font-size:15px;transform:scaleX(1.028);transform-origin:0 0;">bt_ble</span>
<svg style="left:29px;top:191px;" width="7" height="10" viewBox="0 0 7 10"><path d="M1.5 1L5.5 5 1.5 9" fill="none" stroke="#8c8c8c" stroke-width="1.2"/></svg>
<svg style="left:45px;top:188px;" width="16" height="15" viewBox="0 0 16 15"><path d="M0.5 3.5h5l1.5 1.5h7v9h-13.5z" fill="#f5d98a" stroke="#b8862a"/><path d="M0.5 14.5l3-6h12l-2.5 6z" fill="#fbe7a8" stroke="#b8862a"/><rect x="8.5" y="0.5" width="7" height="6" rx="1" fill="#7a98d8" stroke="#4a68b0"/><path d="M13.5 2.3a2 2 0 1 0 0 2.4" fill="none" stroke="#fff" stroke-width="1.1"/></svg>
<span class="t" style="left:65px;top:186px;font-size:15px;transform:scaleX(1.031);transform-origin:0 0;">component</span>
<svg style="left:29px;top:214px;" width="7" height="10" viewBox="0 0 7 10"><path d="M1.5 1L5.5 5 1.5 9" fill="none" stroke="#8c8c8c" stroke-width="1.2"/></svg>
<svg style="left:45px;top:211px;" width="16" height="15" viewBox="0 0 16 15"><path d="M0.5 3.5h5l1.5 1.5h7v9h-13.5z" fill="#f5d98a" stroke="#b8862a"/><path d="M0.5 14.5l3-6h12l-2.5 6z" fill="#fbe7a8" stroke="#b8862a"/><rect x="8.5" y="0.5" width="7" height="6" rx="1" fill="#7a98d8" stroke="#4a68b0"/><path d="M13.5 2.3a2 2 0 1 0 0 2.4" fill="none" stroke="#fff" stroke-width="1.1"/></svg>
<span class="t" style="left:65px;top:209px;font-size:15px;transform:scaleX(1.015);transform-origin:0 0;">device</span>
<svg style="left:29px;top:237px;" width="7" height="10" viewBox="0 0 7 10"><path d="M1.5 1L5.5 5 1.5 9" fill="none" stroke="#8c8c8c" stroke-width="1.2"/></svg>
<svg style="left:45px;top:234px;" width="16" height="15" viewBox="0 0 16 15"><path d="M0.5 3.5h5l1.5 1.5h7v9h-13.5z" fill="#f5d98a" stroke="#b8862a"/><path d="M0.5 14.5l3-6h12l-2.5 6z" fill="#fbe7a8" stroke="#b8862a"/><rect x="8.5" y="0.5" width="7" height="6" rx="1" fill="#7a98d8" stroke="#4a68b0"/><path d="M13.5 2.3a2 2 0 1 0 0 2.4" fill="none" stroke="#fff" stroke-width="1.1"/></svg>
<span class="t" style="left:65px;top:232px;font-size:15px;transform:scaleX(1.075);transform-origin:0 0;">doc</span>
<svg style="left:29px;top:260px;" width="7" height="10" viewBox="0 0 7 10"><path d="M1.5 1L5.5 5 1.5 9" fill="none" stroke="#8c8c8c" stroke-width="1.2"/></svg>
<svg style="left:45px;top:257px;" width="16" height="15" viewBox="0 0 16 15"><path d="M0.5 3.5h5l1.5 1.5h7v9h-13.5z" fill="#f5d98a" stroke="#b8862a"/><path d="M0.5 14.5l3-6h12l-2.5 6z" fill="#fbe7a8" stroke="#b8862a"/><rect x="8.5" y="0.5" width="7" height="6" rx="1" fill="#7a98d8" stroke="#4a68b0"/><path d="M13.5 2.3a2 2 0 1 0 0 2.4" fill="none" stroke="#fff" stroke-width="1.1"/></svg>
<span class="t" style="left:65px;top:255px;font-size:15px;">drivers</span>
<svg style="left:29px;top:283px;" width="7" height="10" viewBox="0 0 7 10"><path d="M1.5 1L5.5 5 1.5 9" fill="none" stroke="#8c8c8c" stroke-width="1.2"/></svg>
<svg style="left:45px;top:280px;" width="16" height="15" viewBox="0 0 16 15"><path d="M0.5 3.5h5l1.5 1.5h7v9h-13.5z" fill="#f5d98a" stroke="#b8862a"/><path d="M0.5 14.5l3-6h12l-2.5 6z" fill="#fbe7a8" stroke="#b8862a"/><rect x="8.5" y="0.5" width="7" height="6" rx="1" fill="#7a98d8" stroke="#4a68b0"/><path d="M13.5 2.3a2 2 0 1 0 0 2.4" fill="none" stroke="#fff" stroke-width="1.1"/></svg>
<span class="t" style="left:65px;top:278px;font-size:15px;transform:scaleX(1.025);transform-origin:0 0;">edgefast</span>
<svg style="left:29px;top:306px;" width="7" height="10" viewBox="0 0 7 10"><path d="M1.5 1L5.5 5 1.5 9" fill="none" stroke="#8c8c8c" stroke-width="1.2"/></svg>
<svg style="left:45px;top:303px;" width="16" height="15" viewBox="0 0 16 15"><path d="M0.5 3.5h5l1.5 1.5h7v9h-13.5z" fill="#f5d98a" stroke="#b8862a"/><path d="M0.5 14.5l3-6h12l-2.5 6z" fill="#fbe7a8" stroke="#b8862a"/><rect x="8.5" y="0.5" width="7" height="6" rx="1" fill="#7a98d8" stroke="#4a68b0"/><path d="M13.5 2.3a2 2 0 1 0 0 2.4" fill="none" stroke="#fff" stroke-width="1.1"/></svg>
<span class="t" style="left:65px;top:301px;font-size:15px;transform:scaleX(1.027);transform-origin:0 0;">ethermind</span>
<svg style="left:29px;top:329px;" width="7" height="10" viewBox="0 0 7 10"><path d="M1.5 1L5.5 5 1.5 9" fill="none" stroke="#8c8c8c" stroke-width="1.2"/></svg>
<svg style="left:45px;top:326px;" width="16" height="15" viewBox="0 0 16 15"><path d="M0.5 3.5h5l1.5 1.5h7v9h-13.5z" fill="#f5d98a" stroke="#b8862a"/><path d="M0.5 14.5l3-6h12l-2.5 6z" fill="#fbe7a8" stroke="#b8862a"/><rect x="8.5" y="0.5" width="7" height="6" rx="1" fill="#7a98d8" stroke="#4a68b0"/><path d="M13.5 2.3a2 2 0 1 0 0 2.4" fill="none" stroke="#fff" stroke-width="1.1"/></svg>
<span class="t" style="left:65px;top:324px;font-size:15px;transform:scaleX(1.058);transform-origin:0 0;">fatfs</span>
<svg style="left:29px;top:352px;" width="7" height="10" viewBox="0 0 7 10"><path d="M1.5 1L5.5 5 1.5 9" fill="none" stroke="#8c8c8c" stroke-width="1.2"/></svg>
<svg style="left:45px;top:349px;" width="16" height="15" viewBox="0 0 16 15"><path d="M0.5 3.5h5l1.5 1.5h7v9h-13.5z" fill="#f5d98a" stroke="#b8862a"/><path d="M0.5 14.5l3-6h12l-2.5 6z" fill="#fbe7a8" stroke="#b8862a"/><rect x="8.5" y="0.5" width="7" height="6" rx="1" fill="#7a98d8" stroke="#4a68b0"/><path d="M13.5 2.3a2 2 0 1 0 0 2.4" fill="none" stroke="#fff" stroke-width="1.1"/></svg>
<span class="t" style="left:65px;top:347px;font-size:15px;transform:scaleX(1.028);transform-origin:0 0;">framework</span>
<svg style="left:29px;top:375px;" width="7" height="10" viewBox="0 0 7 10"><path d="M1.5 1L5.5 5 1.5 9" fill="none" stroke="#8c8c8c" stroke-width="1.2"/></svg>
<svg style="left:45px;top:372px;" width="16" height="15" viewBox="0 0 16 15"><path d="M0.5 3.5h5l1.5 1.5h7v9h-13.5z" fill="#f5d98a" stroke="#b8862a"/><path d="M0.5 14.5l3-6h12l-2.5 6z" fill="#fbe7a8" stroke="#b8862a"/><rect x="8.5" y="0.5" width="7" height="6" rx="1" fill="#7a98d8" stroke="#4a68b0"/><path d="M13.5 2.3a2 2 0 1 0 0 2.4" fill="none" stroke="#fff" stroke-width="1.1"/></svg>
<span class="t" style="left:65px;top:370px;font-size:15px;transform:scaleX(1.023);transform-origin:0 0;">freertos</span>
<svg style="left:29px;top:398px;" width="7" height="10" viewBox="0 0 7 10"><path d="M1.5 1L5.5 5 1.5 9" fill="none" stroke="#8c8c8c" stroke-width="1.2"/></svg>
<svg style="left:45px;top:395px;" width="16" height="15" viewBox="0 0 16 15"><path d="M0.5 3.5h5l1.5 1.5h7v9h-13.5z" fill="#f5d98a" stroke="#b8862a"/><path d="M0.5 14.5l3-6h12l-2.5 6z" fill="#fbe7a8" stroke="#b8862a"/><rect x="8.5" y="0.5" width="7" height="6" rx="1" fill="#7a98d8" stroke="#4a68b0"/><path d="M13.5 2.3a2 2 0 1 0 0 2.4" fill="none" stroke="#fff" stroke-width="1.1"/></svg>
<span class="t" style="left:65px;top:393px;font-size:15px;">linkscripts</span>
<svg style="left:29px;top:421px;" width="7" height="10" viewBox="0 0 7 10"><path d="M1.5 1L5.5 5 1.5 9" fill="none" stroke="#8c8c8c" stroke-width="1.2"/></svg>
<svg style="left:45px;top:418px;" width="16" height="15" viewBox="0 0 16 15"><path d="M0.5 3.5h5l1.5 1.5h7v9h-13.5z" fill="#f5d98a" stroke="#b8862a"/><path d="M0.5 14.5l3-6h12l-2.5 6z" fill="#fbe7a8" stroke="#b8862a"/><rect x="8.5" y="0.5" width="7" height="6" rx="1" fill="#7a98d8" stroke="#4a68b0"/><path d="M13.5 2.3a2 2 0 1 0 0 2.4" fill="none" stroke="#fff" stroke-width="1.1"/></svg>
<span class="t" style="left:65px;top:416px;font-size:15px;transform:scaleX(1.103);transform-origin:0 0;">lwip</span>
<svg style="left:29px;top:444px;" width="7" height="10" viewBox="0 0 7 10"><path d="M1.5 1L5.5 5 1.5 9" fill="none" stroke="#8c8c8c" stroke-width="1.2"/></svg>
<svg style="left:45px;top:441px;" width="16" height="15" viewBox="0 0 16 15"><path d="M0.5 3.5h5l1.5 1.5h7v9h-13.5z" fill="#f5d98a" stroke="#b8862a"/><path d="M0.5 14.5l3-6h12l-2.5 6z" fill="#fbe7a8" stroke="#b8862a"/><rect x="8.5" y="0.5" width="7" height="6" rx="1" fill="#7a98d8" stroke="#4a68b0"/><path d="M13.5 2.3a2 2 0 1 0 0 2.4" fill="none" stroke="#fff" stroke-width="1.1"/></svg>
<span class="t" style="left:65px;top:439px;font-size:15px;transform:scaleX(1.014);transform-origin:0 0;">sdmmc</span>
<svg style="left:27px;top:467px;" width="10" height="7" viewBox="0 0 10 7"><path d="M1 1.5L5 5.5 9 1.5" fill="none" stroke="#333" stroke-width="1.4"/></svg>
<svg style="left:45px;top:464px;" width="16" height="15" viewBox="0 0 16 15"><path d="M0.5 3.5h5l1.5 1.5h7v9h-13.5z" fill="#f5d98a" stroke="#b8862a"/><path d="M0.5 14.5l3-6h12l-2.5 6z" fill="#fbe7a8" stroke="#b8862a"/><rect x="8.5" y="0.5" width="7" height="6" rx="1" fill="#7a98d8" stroke="#4a68b0"/><path d="M13.5 2.3a2 2 0 1 0 0 2.4" fill="none" stroke="#fff" stroke-width="1.1"/></svg>
<span class="t" style="left:65px;top:462px;font-size:15px;transform:scaleX(0.977);transform-origin:0 0;">source</span>
<svg style="left:49px;top:490px;" width="7" height="10" viewBox="0 0 7 10"><path d="M1.5 1L5.5 5 1.5 9" fill="none" stroke="#8c8c8c" stroke-width="1.2"/></svg>
<svg style="left:66px;top:487px;" width="14" height="16" viewBox="0 0 14 16"><path d="M0.5 0.5h8l4 4v11h-12z" fill="#fff" stroke="#a8782a"/><text x="2" y="13" font-size="9" font-family="Liberation Sans" font-weight="bold" fill="#2a4a8a">h</text></svg>
<span class="t" style="left:85px;top:485px;font-size:15px;">app_config.h</span>
</div>
<div style="left:456px;top:136px;width:21px;height:494px;background:#f0f0f0"></div>
<svg style="left:461px;top:144px;" width="10" height="6" viewBox="0 0 10 6"><path d="M1 5.5L5 1.5 9 5.5" fill="none" stroke="#555" stroke-width="2"/></svg>
<svg style="left:461px;top:616px;" width="10" height="6" viewBox="0 0 10 6"><path d="M1 0.5L5 4.5 9 0.5" fill="none" stroke="#555" stroke-width="2"/></svg>
<div style="left:457px;top:157px;width:19px;height:279px;background:#cdcdcd"></div>
<div style="left:1px;top:637px;width:478px;height:367px;background:#fff;border:1px solid #d6d6d6"></div>
<div style="left:2px;top:638px;width:476px;height:29px;background:#f0f0f0;border-bottom:1px solid #d6d6d6"></div>
<div style="left:2px;top:638px;width:153px;height:31px;background:#f0f0f0;border-right:1px solid #d6d6d6"></div>
<svg style="left:5px;top:645px;" width="15" height="15" viewBox="0 0 15 15"><path d="M4.2 3.2A6 6 0 1 0 10.8 3.2" fill="none" stroke="#2a9ae0" stroke-width="2"/><path d="M7.5 0.5v6.5" stroke="#2a9ae0" stroke-width="2"/></svg>
<span class="t" style="left:24px;top:643px;font-size:15px;transform:scaleX(0.950);transform-origin:0 0;">Quickstart Panel</span>
<svg style="left:137px;top:648px;" width="11" height="11" viewBox="0 0 11 11"><path d="M0.5 2.3L2.3 0.5 5.5 3.7 8.7 0.5 10.5 2.3 7.3 5.5 10.5 8.7 8.7 10.5 5.5 7.3 2.3 10.5 0.5 8.7 3.7 5.5z" fill="#fff" stroke="#6e6e6e" stroke-width="1" stroke-linejoin="round"/></svg>
<svg style="left:159px;top:647px;" width="18" height="12" viewBox="0 0 18 12"><text x="0" y="9" font-size="9.5" font-family="Liberation Sans" fill="#2e5fa8" font-weight="bold">(x)=</text></svg>
<span class="t" style="left:179px;top:643px;font-size:15px;transform:scaleX(0.969);transform-origin:0 0;">Variables</span>
<svg style="left:251px;top:646px;" width="16" height="16" viewBox="0 0 16 16"><circle cx="5" cy="5" r="3.8" fill="#5b8fd0" stroke="#2f5f9f"/><circle cx="11" cy="10.5" r="3.8" fill="#4a86c8" stroke="#2f5f9f"/></svg>
<span class="t" style="left:269px;top:643px;font-size:15px;transform:scaleX(0.978);transform-origin:0 0;">Breakpoints</span>
<div style="left:436px;top:644px;width:10px;height:4px;border:1px solid #555"></div>
<div style="left:459px;top:644px;width:11px;height:10px;border:1px solid #555;border-top-width:2px"></div>
<div style="left:456px;top:669px;width:21px;height:333px;background:#f0f0f0"></div>
<svg style="left:461px;top:677px;" width="10" height="6" viewBox="0 0 10 6"><path d="M1 5.5L5 1.5 9 5.5" fill="none" stroke="#555" stroke-width="2"/></svg>
<svg style="left:461px;top:988px;" width="10" height="6" viewBox="0 0 10 6"><path d="M1 0.5L5 4.5 9 0.5" fill="none" stroke="#555" stroke-width="2"/></svg>
<div style="left:457px;top:690px;width:19px;height:175px;background:#cdcdcd"></div>
<div style="left:2px;top:1001px;width:476px;height:2px;background:#f0f0f0"></div>
<div style="left:2px;top:668px;width:454px;height:333px;overflow:hidden;background:#fff">
</div>
<svg style="left:13px;top:687px;" width="32" height="32" viewBox="0 0 32 32"><rect x="0.5" y="0.5" width="31" height="31" rx="5" fill="#1b3f94" stroke="#1b3f94"/><path d="M7 3L25 22M25 3L7 22" stroke="#8c90d0" stroke-width="5"/><rect x="2" y="21" width="28" height="9" rx="3" fill="#fff"/><text x="16" y="29" font-size="7.5" font-family="Liberation Sans" font-weight="bold" fill="#1b3f94" text-anchor="middle">IDE</text></svg>
<span class="t" style="left:56px;top:685px;font-size:19.5px;font-weight:bold;color:#1f3f93">MCUXpresso IDE - Quickstart Panel</span>
<span class="t" style="left:55px;top:708px;font-size:15px;transform:scaleX(0.986);transform-origin:0 0;">Project: evkmimxrt1060_peripheral_ht [Debug]</span>
<div style="left:8px;top:737px;width:442px;height:1px;background:#f4f4f4"></div>
<div style="left:10px;top:739px;width:438px;height:23px;background:#e8e8e8"></div>
<svg style="left:15px;top:749px;" width="9" height="5" viewBox="0 0 9 5"><path d="M0 0H9L4.5 5z" fill="#0a6ed1"/></svg>
<span class="t" style="left:29px;top:740px;font-size:15px;font-weight:bold;transform:scaleX(0.987);transform-origin:0 0;color:#0a6ed1">Create or import a project</span>
<svg style="left:19px;top:791px;" width="32" height="32" viewBox="0 0 32 32"><rect x="0" y="0" width="32" height="32" rx="5" fill="#1b3f94"/><path d="M4 6l4 3-4 3M9 13h5" stroke="#fff" stroke-width="1.5" fill="none"/><path d="M11 27l2-6 11-13 3 3-11 13z" fill="none" stroke="#fff" stroke-width="2"/></svg>
<svg style="left:57px;top:772px;" width="16" height="16" viewBox="0 0 16 16"><rect x="0.5" y="0.5" width="15" height="15" rx="2" fill="#8a8ed0" stroke="#5a5ea8"/><path d="M4 3.5L12 12.5M12 3.5L4 12.5" stroke="#1d2f8c" stroke-width="2.4"/></svg>
<svg style="left:57px;top:796px;" width="16" height="16" viewBox="0 0 16 16"><rect x="0.5" y="0.5" width="15" height="15" rx="2" fill="#6ab8b8" stroke="#3a8888"/><path d="M4 3.5L12 12.5M12 3.5L4 12.5" stroke="#1a7070" stroke-width="2.4"/></svg>
<svg style="left:57px;top:820px;" width="16" height="16" viewBox="0 0 16 16"><circle cx="8" cy="8" r="7.5" fill="#d8e4f4"/><circle cx="8" cy="6.5" r="3" fill="#1a2a5a"/><rect x="7" y="8" width="2" height="5" fill="#1a2a5a"/></svg>
<span class="t" style="left:78px;top:773px;font-size:15px;transform:scaleX(0.982);transform-origin:0 0;color:#1a73d9">New project...</span>
<span class="t" style="left:78px;top:797px;font-size:15px;transform:scaleX(0.968);transform-origin:0 0;color:#1a73d9">Import SDK example(s)...</span>
<span class="t" style="left:78px;top:821px;font-size:15px;color:#1a73d9">Import project(s) from file system...</span>
<div style="left:8px;top:853px;width:442px;height:1px;background:#f4f4f4"></div>
<div style="left:10px;top:855px;width:438px;height:23px;background:#e8e8e8"></div>
<svg style="left:15px;top:865px;" width="9" height="5" viewBox="0 0 9 5"><path d="M0 0H9L4.5 5z" fill="#0a6ed1"/></svg>
<span class="t" style="left:29px;top:856px;font-size:15px;font-weight:bold;transform:scaleX(0.966);transform-origin:0 0;color:#0a6ed1">Build your project</span>
<svg style="left:19px;top:895px;" width="32" height="32" viewBox="0 0 32 32"><rect x="0" y="0" width="32" height="32" rx="5" fill="#1b3f94"/><circle cx="14" cy="8" r="3.6" fill="none" stroke="#fff" stroke-width="1.8"/><circle cx="14" cy="8" r="4.6" fill="none" stroke="#fff" stroke-width="1.6" stroke-dasharray="1.5 1.5"/><circle cx="7" cy="14" r="2.4" fill="none" stroke="#fff" stroke-width="1.5"/><circle cx="19" cy="20" r="5.5" fill="none" stroke="#fff" stroke-width="3.2"/><circle cx="19" cy="20" r="7.6" fill="none" stroke="#fff" stroke-width="2.2" stroke-dasharray="2.4 2"/></svg>
<svg style="left:57px;top:888px;" width="16" height="16" viewBox="0 0 16 16"><path d="M1 4l5-3 4 2-2 2-2-1-2 2z" fill="#777" stroke="#444"/><path d="M6 5l2-2 7 9-2 3z" fill="#b87a40" stroke="#7a4a1a"/></svg>
<svg style="left:57px;top:912px;" width="16" height="16" viewBox="0 0 16 16"><path d="M14 1L8 9" stroke="#a86a2a" stroke-width="1.5"/><path d="M9 8L2 13l1 2 7-5z" fill="#d8b030" stroke="#8a6a10"/></svg>
<span class="t" style="left:78px;top:890px;font-size:15px;transform:scaleX(0.989);transform-origin:0 0;color:#1a73d9">Build</span>
<span class="t" style="left:78px;top:914px;font-size:15px;transform:scaleX(0.944);transform-origin:0 0;color:#1a73d9">Clean</span>
<div style="left:8px;top:946px;width:442px;height:1px;background:#f4f4f4"></div>
<div style="left:10px;top:947px;width:438px;height:26px;background:#e8e8e8"></div>
<svg style="left:15px;top:959px;" width="9" height="5" viewBox="0 0 9 5"><path d="M0 0H9L4.5 5z" fill="#0a6ed1"/></svg>
<span class="t" style="left:29px;top:950px;font-size:15px;font-weight:bold;transform:scaleX(0.978);transform-origin:0 0;color:#0a6ed1">Debug your project</span>
<svg style="left:321px;top:951px;" width="17" height="17" viewBox="0 0 17 17"><rect x="0.5" y="0.5" width="16" height="16" rx="3" fill="#2a4a98" stroke="#1a2a6a"/><text x="1.5" y="13" font-size="10.5" font-family="Liberation Sans" font-weight="bold" fill="#fff">LS</text></svg>
<svg style="left:346px;top:958px;" width="9" height="5" viewBox="0 0 9 5"><path d="M0 0H9L4.5 5z" fill="#000"/></svg>
<svg style="left:364px;top:951px;" width="16" height="17" viewBox="0 0 16 17"><rect x="0.5" y="0.5" width="15" height="16" fill="#fff" stroke="#1a2aa0"/><rect x="1" y="1" width="14" height="11" fill="#1a2aa0"/><text x="2" y="10" font-size="8" font-family="Liberation Sans" font-weight="bold" fill="#fff">PE</text><path d="M2 14.5h2M6 14.5h2M10 14.5h2" stroke="#1a2aa0" stroke-width="2"/></svg>
<svg style="left:388px;top:958px;" width="9" height="5" viewBox="0 0 9 5"><path d="M0 0H9L4.5 5z" fill="#000"/></svg>
<svg style="left:406px;top:951px;" width="17" height="17" viewBox="0 0 17 17"><rect x="0" y="0" width="17" height="17" fill="#1010e0"/><text x="8.5" y="8" font-size="8" font-family="Liberation Sans" font-weight="bold" fill="#fff" text-anchor="middle">J</text><text x="8.5" y="15.5" font-size="6.5" font-family="Liberation Sans" font-weight="bold" fill="#fff" text-anchor="middle">Link</text></svg>
<svg style="left:430px;top:958px;" width="9" height="5" viewBox="0 0 9 5"><path d="M0 0H9L4.5 5z" fill="#000"/></svg>
<div style="left:19px;top:989px;width:32px;height:12px;overflow:hidden">
<svg style="left:0px;top:0px;" width="32" height="32" viewBox="0 0 32 32"><rect x="0" y="0" width="32" height="32" rx="5" fill="#1b3f94"/><path d="M8 6l3 5h10l3-5" stroke="#fff" stroke-width="2" fill="none"/><circle cx="16" cy="9" r="3" fill="#fff"/></svg>
</div>
<div style="left:57px;top:982px;width:18px;height:19px;overflow:hidden">
<svg style="left:0px;top:0px;" width="16" height="16" viewBox="0 0 16 16"><path d="M3 3l3 3M13 3l-3 3M1 8h4M15 8h-4M2 14l3-3M14 14l-3-3M8 1v3" stroke="#1a2a9a" stroke-width="1.2"/><ellipse cx="8" cy="9" rx="3.6" ry="4.8" fill="#4a6ae0" stroke="#1a2a9a"/><path d="M6.5 7.5l2 2" stroke="#fff" stroke-width="0.8"/></svg>
</div>
<div style="left:60px;top:983px;width:80px;height:18px;overflow:hidden">
<span class="t" style="left:18px;top:0px;font-size:15px;color:#1a73d9">Debug</span>
</div>
<div style="left:483px;top:83px;width:931px;height:428px;background:#f0f0f0;border:1px solid #d6d6d6"></div>
<div style="left:484px;top:84px;width:93px;height:29px;background:#f0f0f0;border-right:1px solid #d6d6d6"></div>
<div style="left:577px;top:111px;width:836px;height:1px;background:#d6d6d6"></div>
<svg style="left:491px;top:91px;" width="12" height="15" viewBox="0 0 12 15"><path d="M0.5 0.5h7.5l3.5 3.5v10.5h-11z" fill="#eef4fb" stroke="#a08850"/><path d="M8 0.5v3.5h3.5" fill="#f0e0b0" stroke="#a08850"/><text x="1.5" y="12" font-size="9.5" font-family="Liberation Sans" fill="#2a5fb0" font-weight="bold">.c</text></svg>
<span class="t" style="left:508px;top:89px;font-size:15px;transform:scaleX(0.951);transform-origin:0 0;">main.c</span>
<svg style="left:558px;top:93px;" width="11" height="11" viewBox="0 0 11 11"><path d="M0.5 2.3L2.3 0.5 5.5 3.7 8.7 0.5 10.5 2.3 7.3 5.5 10.5 8.7 8.7 10.5 5.5 7.3 2.3 10.5 0.5 8.7 3.7 5.5z" fill="#fff" stroke="#6e6e6e" stroke-width="1" stroke-linejoin="round"/></svg>
<div style="left:1369px;top:90px;width:10px;height:4px;border:1px solid #555"></div>
<div style="left:1392px;top:90px;width:11px;height:10px;border:1px solid #555;border-top-width:2px"></div>
<div style="left:484px;top:114px;width:894px;height:373px;background:#fff"></div>
<div style="left:484px;top:114px;width:14px;height:373px;background:#f8f8f8"></div>
<div style="left:535px;top:114px;width:1px;height:373px;background:#f4f4f4"></div>
<div style="left:484px;top:114px;width:894px;height:373px;overflow:hidden">
<div style="left:53px;top:0px;width:841px;height:20px;background:#e8f2fe"></div>
<span class="m" style="left:32px;top:3px;color:#787878">1</span>
<span class="m" style="left:53px;top:3px;color:#3f7f5f">/*</span>
<svg style="left:41px;top:6px;" width="9" height="9" viewBox="0 0 9 9"><circle cx="4.5" cy="4.5" r="4" fill="#eef2f8" stroke="#8a9ab0"/><path d="M2.5 4.5h4" stroke="#5a6a80"/></svg>
<span class="m" style="left:32px;top:23px;color:#787878">2</span>
<span class="m" style="left:53px;top:23px;color:#3f7f5f"> * Copyright 2021 NXP</span>
<span class="m" style="left:32px;top:43px;color:#787878">3</span>
<span class="m" style="left:53px;top:43px;color:#3f7f5f"> * All rights reserved.</span>
<span class="m" style="left:32px;top:63px;color:#787878">4</span>
<span class="m" style="left:53px;top:63px;color:#3f7f5f"> *</span>
<span class="m" style="left:32px;top:83px;color:#787878">5</span>
<span class="m" style="left:53px;top:83px;color:#3f7f5f"> * SPDX-License-Identifier: BSD-3-Clause</span>
<span class="m" style="left:32px;top:103px;color:#787878">6</span>
<span class="m" style="left:53px;top:103px;color:#3f7f5f"> */</span>
<span class="m" style="left:32px;top:123px;color:#787878">7</span>
<span class="m" style="left:32px;top:143px;color:#787878">8</span>
<span class="m" style="left:53px;top:143px;color:#7f0055;font-weight:bold">#include</span>
<span class="m" style="left:134px;top:143px;color:#2a00ff">&quot;fsl_debug_console.h&quot;</span>
<span class="m" style="left:32px;top:163px;color:#787878">9</span>
<span class="m" style="left:23px;top:183px;color:#787878">10</span>
<span class="m" style="left:53px;top:183px;color:#7f0055;font-weight:bold">#include</span>
<span class="m" style="left:134px;top:183px;color:#2a00ff">&quot;FreeRTOS.h&quot;</span>
<span class="m" style="left:23px;top:203px;color:#787878">11</span>
<span class="m" style="left:53px;top:203px;color:#7f0055;font-weight:bold">#include</span>
<span class="m" style="left:134px;top:203px;color:#2a00ff">&quot;task.h&quot;</span>
<span class="m" style="left:23px;top:223px;color:#787878">12</span>
<span class="m" style="left:23px;top:243px;color:#787878">13</span>
<span class="m" style="left:53px;top:243px;color:#7f0055;font-weight:bold">#include</span>
<span class="m" style="left:134px;top:243px;color:#2a00ff">&lt;peripheral_ht.h&gt;</span>
<span class="m" style="left:23px;top:263px;color:#787878">14</span>
<span class="m" style="left:23px;top:283px;color:#787878">15</span>
<span class="m" style="left:53px;top:283px;color:#7f0055;font-weight:bold">#include</span>
<span class="m" style="left:134px;top:283px;color:#2a00ff">&quot;pin_mux.h&quot;</span>
<span class="m" style="left:23px;top:303px;color:#787878">16</span>
<span class="m" style="left:53px;top:303px;color:#7f0055;font-weight:bold">#include</span>
<span class="m" style="left:134px;top:303px;color:#2a00ff">&quot;clock_config.h&quot;</span>
<span class="m" style="left:23px;top:323px;color:#787878">17</span>
<span class="m" style="left:53px;top:323px;color:#7f0055;font-weight:bold">#include</span>
<span class="m" style="left:134px;top:323px;color:#2a00ff">&quot;board.h&quot;</span>
<span class="m" style="left:23px;top:343px;color:#787878">18</span>
<span class="m" style="left:53px;top:343px;color:#7f0055;font-weight:bold">#include</span>
<span class="m" style="left:134px;top:343px;color:#2a00ff">&quot;fsl_adapter_uart.h&quot;</span>
<span class="m" style="left:23px;top:363px;color:#787878">19</span>
<span class="m" style="left:53px;top:363px;color:#3f7f5f">/********************************************************************************</span>
<svg style="left:41px;top:366px;" width="9" height="9" viewBox="0 0 9 9"><circle cx="4.5" cy="4.5" r="4" fill="#eef2f8" stroke="#8a9ab0"/><path d="M2.5 4.5h4" stroke="#5a6a80"/></svg>
</div>
<div style="left:1378px;top:114px;width:20px;height:373px;background:#f0f0f0"></div>
<svg style="left:1383px;top:122px;" width="10" height="6" viewBox="0 0 10 6"><path d="M1 5.5L5 1.5 9 5.5" fill="none" stroke="#555" stroke-width="2"/></svg>
<svg style="left:1383px;top:473px;" width="10" height="6" viewBox="0 0 10 6"><path d="M1 0.5L5 4.5 9 0.5" fill="none" stroke="#555" stroke-width="2"/></svg>
<div style="left:1379px;top:135px;width:18px;height:52px;background:#cdcdcd"></div>
<div style="left:1398px;top:114px;width:13px;height:394px;background:#f7f7f7"></div>
<div style="left:484px;top:487px;width:914px;height:23px;background:#f0f0f0"></div>
<div style="left:484px;top:487px;width:51px;height:23px;background:#f6f6f6"></div>
<svg style="left:541px;top:493px;" width="7" height="10" viewBox="0 0 7 10"><path d="M5.5 1L1.5 5 5.5 9" fill="none" stroke="#aaa" stroke-width="1.6"/></svg>
<svg style="left:1362px;top:493px;" width="7" height="10" viewBox="0 0 7 10"><path d="M1.5 1L5.5 5 1.5 9" fill="none" stroke="#aaa" stroke-width="1.6"/></svg>
<div style="left:1418px;top:83px;width:501px;height:428px;background:#f0f0f0;border:1px solid #d6d6d6"></div>
<div style="left:1419px;top:84px;width:97px;height:28px;background:#f0f0f0;border-right:1px solid #d6d6d6"></div>
<div style="left:1516px;top:111px;width:402px;height:1px;background:#d6d6d6"></div>
<svg style="left:1424px;top:89px;" width="16" height="16" viewBox="0 0 16 16"><rect x="1.5" y="1.5" width="5" height="5" fill="none" stroke="#3a7ad0" stroke-width="1.3"/><rect x="1.5" y="9.5" width="5" height="5" fill="none" stroke="#3a7ad0" stroke-width="1.3"/><path d="M8 3h7M10 7h5M8 12h7" stroke="#3a7ad0" stroke-width="1.3"/><rect x="9" y="6" width="2" height="2" fill="#3a7ad0"/></svg>
<span class="t" style="left:1443px;top:89px;font-size:15px;transform:scaleX(0.989);transform-origin:0 0;">Outline</span>
<svg style="left:1498px;top:93px;" width="11" height="11" viewBox="0 0 11 11"><path d="M0.5 2.3L2.3 0.5 5.5 3.7 8.7 0.5 10.5 2.3 7.3 5.5 10.5 8.7 8.7 10.5 5.5 7.3 2.3 10.5 0.5 8.7 3.7 5.5z" fill="#fff" stroke="#6e6e6e" stroke-width="1" stroke-linejoin="round"/></svg>
<svg style="left:1519px;top:91px;" width="18" height="12" viewBox="0 0 18 12"><text x="0" y="9" font-size="9.5" font-family="Liberation Sans" fill="#2e5fa8" font-weight="bold">(x)=</text></svg>
<span class="t" style="left:1539px;top:89px;font-size:15px;">Global Variables</span>
<div style="left:1876px;top:90px;width:10px;height:4px;border:1px solid #555"></div>
<div style="left:1899px;top:90px;width:11px;height:10px;border:1px solid #555;border-top-width:2px"></div>
<span class="t" style="left:1426px;top:120px;font-size:15px;">There is no active editor that provides an outline.</span>
<div style="left:483px;top:515px;width:1210px;height:489px;background:#f0f0f0;border:1px solid #d6d6d6"></div>
<div style="left:484px;top:543px;width:1208px;height:1px;background:#d6d6d6"></div>
<div style="left:883px;top:516px;width:102px;height:28px;background:#f5f5f5;border-left:1px solid #d6d6d6;border-right:1px solid #d6d6d6"></div>
<svg style="left:488px;top:523px;" width="17" height="17" viewBox="0 0 17 17"><ellipse cx="6" cy="4" rx="4" ry="2" fill="#f8e08a" stroke="#c8962a"/><path d="M2 4v8a4 2 0 0 0 8 0v-8" fill="#f5d060" stroke="#c8962a"/><ellipse cx="10" cy="7" rx="4" ry="2" fill="#f8e08a" stroke="#c8962a"/><path d="M6 7v8a4 2 0 0 0 8 0v-8" fill="#f2c84a" stroke="#c8962a"/></svg>
<span class="t" style="left:508px;top:521px;font-size:15px;transform:scaleX(0.945);transform-origin:0 0;">Installed SDKs</span>
<svg style="left:612px;top:523px;" width="16" height="16" viewBox="0 0 16 16"><rect x="1.5" y="1.5" width="13" height="13" fill="#f4f8fc" stroke="#6b87ab"/><path d="M1.5 5h13M5 5v9.5M5 8h9.5M5 11h9.5" stroke="#8aa0c0"/></svg>
<span class="t" style="left:632px;top:521px;font-size:15px;transform:scaleX(0.965);transform-origin:0 0;">Properties</span>
<svg style="left:709px;top:523px;" width="16" height="16" viewBox="0 0 16 16"><rect x="1.5" y="0.5" width="13" height="15" fill="#f0ede0" stroke="#9a8a6a"/><path d="M4 3h4v5h-4z" fill="#e04040"/><path d="M9 8h4v5h-4z" fill="#f0c040"/></svg>
<span class="t" style="left:729px;top:521px;font-size:15px;transform:scaleX(0.963);transform-origin:0 0;">Problems</span>
<svg style="left:801px;top:523px;" width="17" height="14" viewBox="0 0 17 14"><rect x="0.5" y="3.5" width="11" height="5" fill="#8ac08a" stroke="#5a8a5a"/><circle cx="12" cy="9" r="4.2" fill="#3aa040" stroke="#267030"/><path d="M10.5 7l3 2-3 2z" fill="#fff"/></svg>
<span class="t" style="left:821px;top:521px;font-size:15px;transform:scaleX(0.925);transform-origin:0 0;">Progress</span>
<svg style="left:887px;top:523px;" width="16" height="16" viewBox="0 0 16 16"><rect x="1.5" y="1.5" width="13" height="10" rx="1" fill="#e8f0fa" stroke="#2a5aa8" stroke-width="1.4"/><path d="M4 5h7M4 8h5" stroke="#2a5aa8"/><path d="M4 14h8" stroke="#2a5aa8" stroke-width="1.5"/></svg>
<span class="t" style="left:907px;top:521px;font-size:15px;transform:scaleX(0.945);transform-origin:0 0;">Console</span>
<svg style="left:989px;top:523px;" width="16" height="16" viewBox="0 0 16 16"><path d="M3 13l7-7 2 2-7 7z" fill="#7a9acb" stroke="#3a5a8a"/><rect x="8" y="1" width="7" height="6" fill="#2a5aa8"/></svg>
<span class="t" style="left:1009px;top:521px;font-size:15px;transform:scaleX(0.988);transform-origin:0 0;">Terminal</span>
<svg style="left:1074.5px;top:523px;" width="14" height="16" viewBox="0 0 14 16"><path d="M0.5 0.5h9l4 4v11h-13z" fill="#f8f8f8" stroke="#8a8a8a"/><text x="1.5" y="13" font-size="6.5" font-family="Liberation Mono" fill="#2a5aa8" font-weight="bold">010</text></svg>
<span class="t" style="left:1094.5px;top:521px;font-size:15px;">Image Info</span>
<svg style="left:1176px;top:523px;" width="16" height="16" viewBox="0 0 16 16"><rect x="1.5" y="1.5" width="12" height="10" fill="#dfe8f5" stroke="#2a5aa8" stroke-width="1.3"/><path d="M4 5h6M4 8h4" stroke="#2a5aa8"/><circle cx="11.5" cy="12" r="3.5" fill="#40a040"/></svg>
<span class="t" style="left:1196px;top:521px;font-size:15px;transform:scaleX(0.983);transform-origin:0 0;">Debugger Console</span>
<svg style="left:966px;top:526px;" width="11" height="11" viewBox="0 0 11 11"><path d="M0.5 2.3L2.3 0.5 5.5 3.7 8.7 0.5 10.5 2.3 7.3 5.5 10.5 8.7 8.7 10.5 5.5 7.3 2.3 10.5 0.5 8.7 3.7 5.5z" fill="#fff" stroke="#6e6e6e" stroke-width="1" stroke-linejoin="round"/></svg>
<svg style="left:1363px;top:520px;" width="14" height="16" viewBox="0 0 14 16"><path d="M4 0.5h6v8h3.5L7 15.5 0.5 8.5H4z" fill="#f8d870" stroke="#c08820"/></svg>
<svg style="left:1386px;top:520px;" width="14" height="16" viewBox="0 0 14 16"><path d="M4 15.5h6v-8h3.5L7 0.5 0.5 7.5H4z" fill="#f8d870" stroke="#c08820"/></svg>
<div style="left:1405px;top:517px;width:23px;height:22px;background:#cce4f7;border:1px solid #99d1ff"></div>
<svg style="left:1409px;top:520px;" width="16" height="16" viewBox="0 0 16 16"><path d="M6 1L1 4.5 6 8V6h6V3H6z" fill="#f8e0a0" stroke="#c8962a"/><path d="M10 7l5 3.5-5 3.5v-2H4V9h6z" fill="#f8e0a0" stroke="#c8962a"/></svg>
<div style="left:1430px;top:519px;width:1px;height:18px;background:#8c8c8c"></div>
<svg style="left:1439px;top:520px;" width="16" height="16" viewBox="0 0 16 16"><rect x="0.5" y="0.5" width="10" height="14" fill="#e8f0f8" stroke="#7a9ac0"/><rect x="11.5" y="0.5" width="4" height="14" fill="#fff" stroke="#5a7ab0"/><rect x="1" y="9" width="6" height="6" fill="#9ab0d0"/></svg>
<svg style="left:1462px;top:520px;" width="16" height="16" viewBox="0 0 16 16"><rect x="0.5" y="0.5" width="10" height="14" fill="#e8f0f8" stroke="#7a9ac0"/><rect x="11.5" y="0.5" width="4" height="14" fill="#fff" stroke="#5a7ab0"/><rect x="1" y="9" width="7" height="6" rx="1" fill="#f0c040" stroke="#a87820"/></svg>
<svg style="left:1487px;top:521px;" width="12" height="10" viewBox="0 0 12 10"><path d="M0 1h10M0 4.5h7M0 8h5" stroke="#b8c8d8" stroke-width="1.3"/></svg>
<svg style="left:1508px;top:520px;" width="17" height="17" viewBox="0 0 17 17"><path d="M0.5 0.5h9l3 3v11h-12z" fill="#f8f4e8" stroke="#a8987a"/><path d="M2 4h6M2 7h6M2 10h4" stroke="#888"/><path d="M10 10l5 5M15 10l-5 5" stroke="#555" stroke-width="1.8"/></svg>
<div style="left:1532px;top:519px;width:1px;height:18px;background:#8c8c8c"></div>
<svg style="left:1539px;top:520px;" width="17" height="16" viewBox="0 0 17 16"><rect x="0.5" y="3.5" width="13" height="12" fill="#eef5fc" stroke="#5a7ab0"/><rect x="0.5" y="3.5" width="13" height="2.5" fill="#4a8ad0"/><path d="M9 8l5-6 2 2-6 5z" fill="#3a9a40" stroke="#1a6a28"/></svg>
<svg style="left:1563px;top:520px;" width="16" height="16" viewBox="0 0 16 16"><rect x="0.5" y="0.5" width="14" height="11" rx="1.5" fill="#3a78c8" stroke="#1a4a98"/><rect x="2.5" y="2.5" width="10" height="7" fill="#e8f0fa"/><path d="M3 14h9" stroke="#1a4a98" stroke-width="2"/></svg>
<svg style="left:1586px;top:527px;" width="9" height="5" viewBox="0 0 9 5"><path d="M0 0H9L4.5 5z" fill="#000"/></svg>
<svg style="left:1605px;top:519px;" width="17" height="17" viewBox="0 0 17 17"><rect x="0.5" y="3.5" width="13" height="12" fill="#fdf6e3" stroke="#a08850"/><rect x="0.5" y="3.5" width="13" height="2.5" fill="#4a8ad0"/><path d="M12 0l1.2 2.3 2.3 1.2-2.3 1.2-1.2 2.3-1.2-2.3-2.3-1.2 2.3-1.2z" fill="#f8e8a0" stroke="#c8962a" stroke-width="0.7"/></svg>
<svg style="left:1628px;top:527px;" width="9" height="5" viewBox="0 0 9 5"><path d="M0 0H9L4.5 5z" fill="#000"/></svg>
<div style="left:1648px;top:523px;width:10px;height:4px;border:1px solid #555"></div>
<div style="left:1671px;top:523px;width:11px;height:10px;border:1px solid #555;border-top-width:2px"></div>
<div style="left:484px;top:543px;width:1208px;height:25px;background:#f0f0f0"></div>
<div style="left:486px;top:567px;width:1192px;height:1px;background:#9a9a9a"></div>
<div style="left:486px;top:568px;width:1184px;height:413px;overflow:hidden;background:#fff">
<span class="m" style="left:2px;top:-5px;color:#000;tab-size:8">arm-none-eabi-gcc -nostdlib -L C:\workspace\evkmimxrt1060_peripheral_ht\ethermind\bluetooth\private\lib  -Xlinker -Map= evkmimxrt1060_</span>
<span class="m" style="left:2px;top:15px;color:#000;tab-size:8">Memory region         Used Size  Region Size  %age Used</span>
<span class="m" style="left:2px;top:35px;color:#000;tab-size:8">     BOARD_FLASH:      988680 B      5568 KB     17.34%</span>
<span class="m" style="left:2px;top:55px;color:#000;tab-size:8">      NVM_region:         64 KB        64 KB    100.00%</span>
<span class="m" style="left:2px;top:75px;color:#000;tab-size:8">         SRAM_OC:      315912 B       768 KB     40.17%</span>
<span class="m" style="left:2px;top:95px;color:#000;tab-size:8">        SRAM_DTC:       15708 B       128 KB     11.98%</span>
<span class="m" style="left:2px;top:115px;color:#000;tab-size:8">        SRAM_ITC:          0 GB       128 KB      0.00%</span>
<span class="m" style="left:2px;top:135px;color:#000;tab-size:8">     BOARD_SDRAM:          0 GB        30 MB      0.00%</span>
<span class="m" style="left:2px;top:155px;color:#000;tab-size:8">   NCACHE_REGION:          0 GB         2 MB      0.00%</span>
<span class="m" style="left:2px;top:175px;color:#000;tab-size:8">Finished building target: evkmimxrt1060_peripheral_ht.axf</span>
<span class="m" style="left:2px;top:195px;color:#000;tab-size:8"></span>
<span class="m" style="left:2px;top:215px;color:#000;tab-size:8">C:/nxp/MCUXpressoIDE_11.3.0_5149_alpha/ide/plugins/com.nxp.mcuxpresso.tools.win32_11.3.0.202008311133/buildtools/bin/make --no-print-directory post-build</span>
<span class="m" style="left:2px;top:235px;color:#000;tab-size:8">Performing post-build steps</span>
<span class="m" style="left:2px;top:255px;color:#000;tab-size:8">arm-none-eabi-size &quot;evkmimxrt1060_peripheral_ht.axf&quot;; # arm-none-eabi-objcopy -v -O binary &quot;evkmimxrt1060_peripheral_ht.axf&quot; &quot;evkmimxrt1060_peripheral_ht.bin&quot;</span>
<span class="m" style="left:2px;top:275px;color:#000;tab-size:8">   text	   data	    bss	    dec	    hex	filename</span>
<span class="m" style="left:2px;top:295px;color:#000;tab-size:8"> 979768	  74448	 303756	1357972	 14b894	evkmimxrt1060_peripheral_ht.axf</span>
<span class="m" style="left:2px;top:315px;color:#000;tab-size:8"></span>
<span class="m" style="left:2px;top:335px;color:#000;tab-size:8"></span>
<span class="m" style="left:2px;top:355px;color:#0000ff;tab-size:8">14:14:39 Build Finished. 0 errors, 0 warnings. (took 1m:34s.429ms)</span>
</div>
<div style="left:1670px;top:568px;width:20px;height:413px;background:#f0f0f0"></div>
<svg style="left:1675px;top:576px;" width="10" height="6" viewBox="0 0 10 6"><path d="M1 5.5L5 1.5 9 5.5" fill="none" stroke="#555" stroke-width="2"/></svg>
<svg style="left:1675px;top:967px;" width="10" height="6" viewBox="0 0 10 6"><path d="M1 0.5L5 4.5 9 0.5" fill="none" stroke="#555" stroke-width="2"/></svg>
<div style="left:1671px;top:938px;width:18px;height:21px;background:#cdcdcd"></div>
<div style="left:484px;top:981px;width:1208px;height:21px;background:#f0f0f0"></div>
<svg style="left:492px;top:985px;" width="7" height="10" viewBox="0 0 7 10"><path d="M5.5 1L1.5 5 5.5 9" fill="none" stroke="#555" stroke-width="2"/></svg>
<div style="left:507px;top:981px;width:21px;height:19px;background:#cdcdcd"></div>
<svg style="left:1654px;top:985px;" width="7" height="10" viewBox="0 0 7 10"><path d="M1.5 1L5.5 5 1.5 9" fill="none" stroke="#555" stroke-width="2"/></svg>
<span class="t" style="left:486px;top:548px;font-size:15px;transform:scaleX(0.975);transform-origin:0 0;">CDT Build Console [evkmimxrt1060_peripheral_ht]</span>
<div style="left:484px;top:543px;width:1208px;height:1px;background:#d6d6d6"></div>
<div style="left:1697px;top:515px;width:222px;height:489px;background:#f0f0f0;border:1px solid #d6d6d6"></div>
<div style="left:1698px;top:543px;width:1220px;height:1px;background:#d6d6d6"></div>
<div style="left:1797px;top:516px;width:66px;height:28px;background:#f5f5f5;border-left:1px solid #d6d6d6;border-right:1px solid #d6d6d6"></div>
<div style="left:1700px;top:569px;width:216px;height:432px;background:#fff"></div>
<svg style="left:1706px;top:524px;" width="10" height="14" viewBox="0 0 10 14"><rect x="0.5" y="0.5" width="9" height="13" rx="3" fill="#8fb3e6" stroke="#2f5fa8"/><rect x="2.5" y="3" width="2" height="9" fill="#dce8f8"/></svg>
<span class="t" style="left:1722px;top:521px;font-size:15px;transform:scaleX(1.040);transform-origin:0 0;">M</span>
<svg style="left:1753px;top:524px;" width="18" height="12" viewBox="0 0 18 12"><text x="0" y="9" font-size="9.5" font-family="Liberation Sans" fill="#2e5fa8" font-weight="bold">(x)=</text></svg>
<span class="t" style="left:1773px;top:521px;font-size:15px;transform:scaleX(0.923);transform-origin:0 0;">H</span>
<svg style="left:1801px;top:522px;" width="16" height="16" viewBox="0 0 16 16"><path d="M2 14l3-6 6-6 3 3-6 6z" fill="#e8b84a" stroke="#a8782a"/><path d="M2 14l3-6 3 3z" fill="#fff3c0"/></svg>
<span class="t" style="left:1821px;top:521px;font-size:15px;transform:scaleX(0.800);transform-origin:0 0;">S</span>
<svg style="left:1844px;top:526px;" width="11" height="11" viewBox="0 0 11 11"><path d="M0.5 2.3L2.3 0.5 5.5 3.7 8.7 0.5 10.5 2.3 7.3 5.5 10.5 8.7 8.7 10.5 5.5 7.3 2.3 10.5 0.5 8.7 3.7 5.5z" fill="#fff" stroke="#6e6e6e" stroke-width="1" stroke-linejoin="round"/></svg>
<div style="left:1876px;top:523px;width:10px;height:4px;border:1px solid #555"></div>
<div style="left:1899px;top:523px;width:11px;height:10px;border:1px solid #555;border-top-width:2px"></div>
<svg style="left:1787px;top:548px;" width="16" height="14" viewBox="0 0 16 14"><path d="M2 8a5 5 0 0 1 9-4l1.5-1.5v5h-5l2-2a3 3 0 0 0-5 2z" fill="#e8e8e8" stroke="#c8c8c8"/><path d="M14 6a5 5 0 0 1-9 4l-1.5 1.5v-5h5l-2 2a3 3 0 0 0 5-2z" fill="#e8e8e8" stroke="#c8c8c8"/></svg>
<div style="left:1811px;top:551px;width:11px;height:11px;background:#c8c8c8;border:1px solid #b0b0b0"></div>
<svg style="left:1832px;top:548px;" width="16" height="16" viewBox="0 0 16 16"><path d="M2 14l3-6 6-6 3 3-6 6z" fill="#e8e8e8" stroke="#c0c0c0"/></svg>
<svg style="left:1855px;top:555px;" width="9" height="5" viewBox="0 0 9 5"><path d="M0 0H9L4.5 5z" fill="#777"/></svg>
<svg style="left:1874px;top:548px;" width="17" height="16" viewBox="0 0 17 16"><rect x="0.5" y="3.5" width="13" height="12" fill="#eef5fc" stroke="#5a7ab0"/><rect x="0.5" y="3.5" width="13" height="2.5" fill="#4a8ad0"/><path d="M9 8l5-6 2 2-6 5z" fill="#3a9a40" stroke="#1a6a28"/></svg>
<svg style="left:1904px;top:548px;" width="6" height="15" viewBox="0 0 6 15"><circle cx="3" cy="2.5" r="1.8" fill="none" stroke="#666"/><circle cx="3" cy="7.5" r="1.8" fill="none" stroke="#666"/><circle cx="3" cy="12.5" r="1.8" fill="none" stroke="#666"/></svg>
<span class="t" style="left:1705px;top:575px;font-size:15px;transform:scaleX(0.969);transform-origin:0 0;">No search results available.</span>
<span class="t" style="left:1705px;top:595px;font-size:15px;transform:scaleX(0.983);transform-origin:0 0;">Start a search from the</span>
<span class="t" style="left:1859px;top:595px;font-size:15px;transform:scaleX(0.933);transform-origin:0 0;color:#0066cc">search</span>
<div style="left:1859px;top:611px;width:42px;height:1px;background:#0066cc"></div>
<span class="t" style="left:1705px;top:615px;font-size:15px;transform:scaleX(1.049);transform-origin:0 0;color:#0066cc">dialog</span>
<div style="left:1705px;top:631px;width:43px;height:1px;background:#0066cc"></div>
<span class="t" style="left:1748px;top:615px;font-size:15px;transform:scaleX(0.720);transform-origin:0 0;">...</span>
<div style="left:1206px;top:1009px;width:2px;height:2px;background:#999"></div>
<div style="left:1563px;top:1009px;width:2px;height:2px;background:#a89f86"></div>
<div style="left:1206px;top:1014px;width:2px;height:2px;background:#999"></div>
<div style="left:1563px;top:1014px;width:2px;height:2px;background:#a89f86"></div>
<div style="left:1206px;top:1019px;width:2px;height:2px;background:#999"></div>
<div style="left:1563px;top:1019px;width:2px;height:2px;background:#a89f86"></div>
<div style="left:1206px;top:1024px;width:2px;height:2px;background:#999"></div>
<div style="left:1563px;top:1024px;width:2px;height:2px;background:#a89f86"></div>
<svg style="left:1572px;top:1012px;" width="12" height="12" viewBox="0 0 12 12"><path d="M3.3 2.6A4.8 4.8 0 1 0 8.7 2.6" fill="none" stroke="#2a8ae0" stroke-width="1.7"/><path d="M6 0.5v5" stroke="#2a8ae0" stroke-width="1.7"/></svg>
<span class="t" style="left:1596px;top:1012px;font-size:15px;transform:scaleX(0.934);transform-origin:0 0;color:#1e6fd0">NXP MIMXRT1062xxxxA</span>
<span class="t" style="left:1753px;top:1012px;font-size:15px;transform:scaleX(1.028);transform-origin:0 0;">*</span>
<span class="t" style="left:1762px;top:1012px;font-size:15px;transform:scaleX(0.957);transform-origin:0 0;color:#1e6fd0">(evkmimx...eral_ht)</span>
<div style="left:1077px;top:103px;width:107px;height:25px;background:rgba(0,0,0,0.35);filter:blur(1.2px)"></div>
<div style="left:1074px;top:100px;width:107px;height:25px;background:#fff;border:1px solid #767676"></div>
<span class="t" style="left:1080px;top:103px;font-size:15px;transform:scaleX(0.980);transform-origin:0 0;color:#4a4a50">Open Element</span>
<svg style="left:900px;top:44px;" width="44" height="48" viewBox="0 0 44 48"><ellipse cx="21.5" cy="24" rx="19" ry="22.5" fill="none" stroke="#e8101c" stroke-width="3.6"/></svg>
</body></html>
